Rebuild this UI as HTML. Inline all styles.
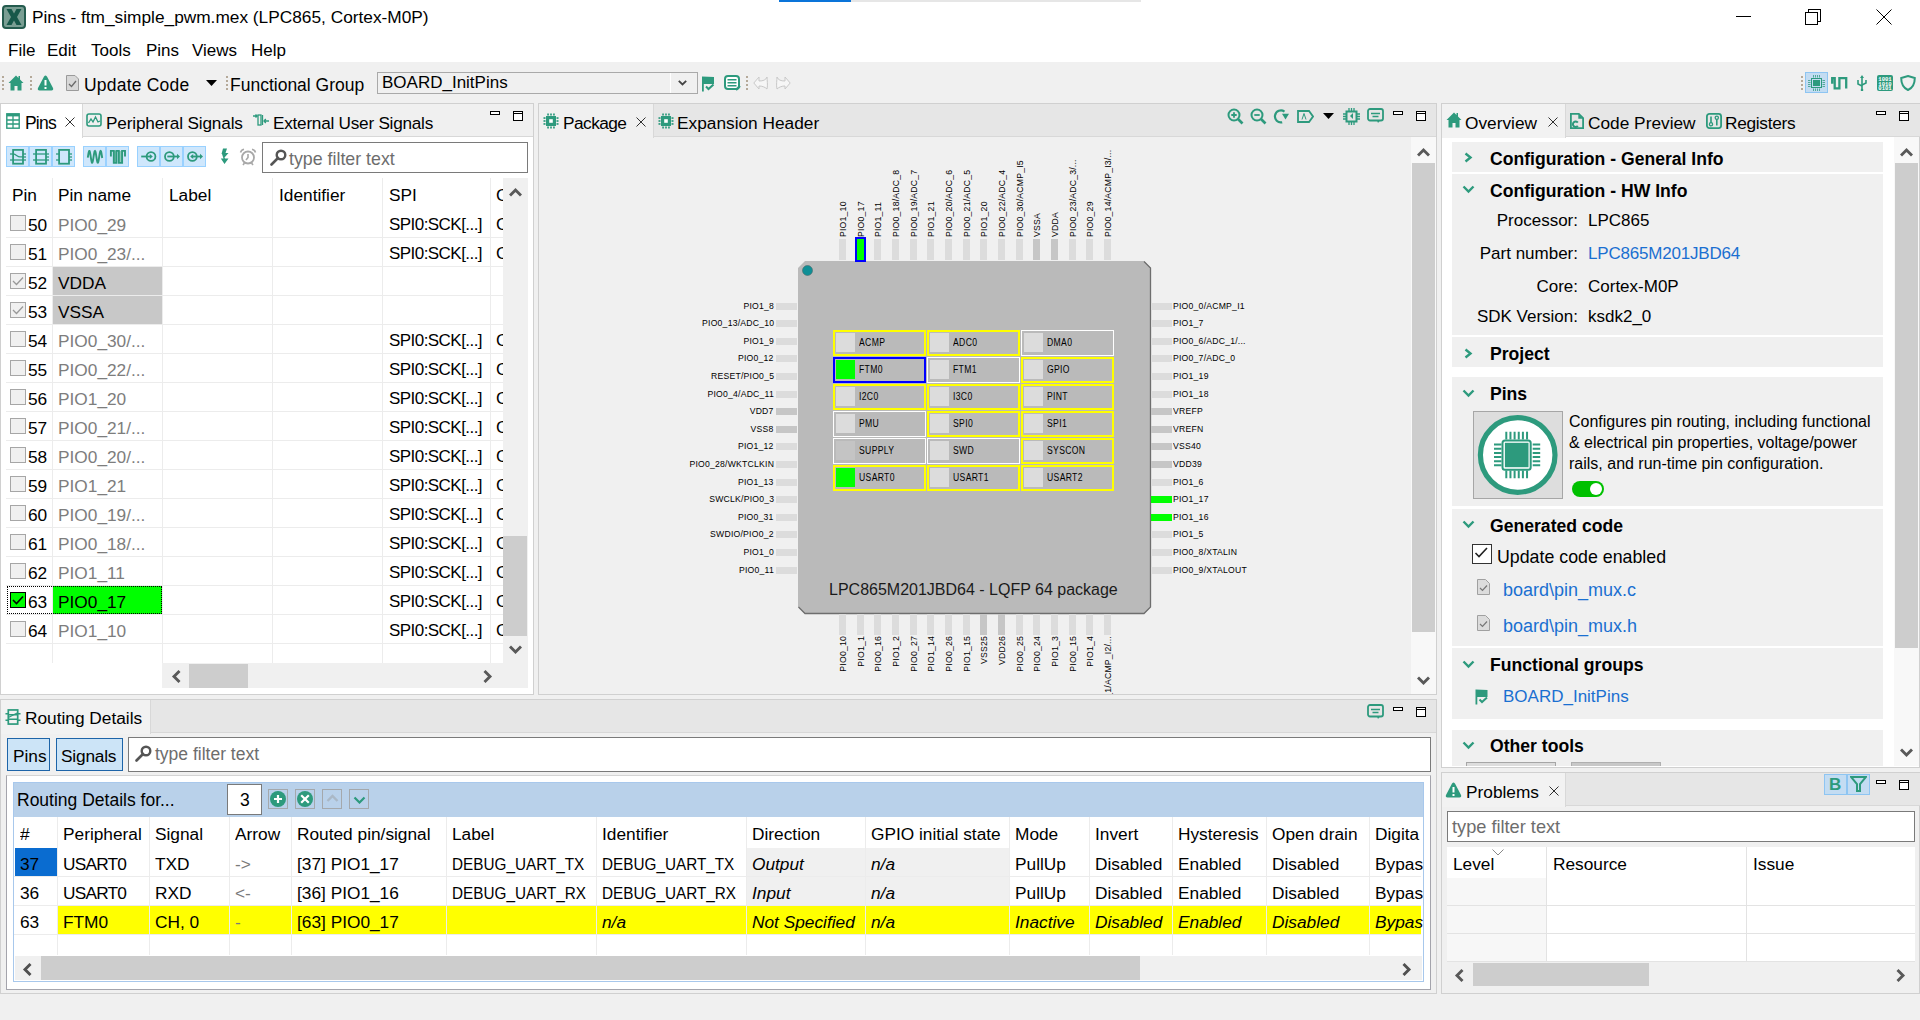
<!DOCTYPE html>
<html><head><meta charset="utf-8">
<style>
*{box-sizing:border-box;margin:0;padding:0}
html,body{width:1920px;height:1020px;overflow:hidden;background:#f0f0f0;font-family:"Liberation Sans",sans-serif;font-size:17px;color:#000}
.a{position:absolute}
.t{position:absolute;white-space:nowrap;line-height:20px}
.panel{position:absolute;border:1px solid #cfcfcf;background:#fff}
.hdr{position:absolute;left:0;right:0;top:0;height:33px;background:linear-gradient(#ebebeb,#e3e3e3);border-bottom:1px solid #d2d2d2}
.tab{position:absolute;top:0;height:33px;background:#f2f2f2;border-right:1px solid #d6d6d6}
.tab.act{background:#fff}
.mn{position:absolute;width:11px;height:5px;border:2px solid #000}
.mx{position:absolute;width:11px;height:11px;border:2px solid #000;border-top-width:3px}
.mx:after{content:"";position:absolute;left:0;right:0;top:1px;height:0}
.gray{color:#7a7a7a}
.sb{position:absolute;background:#f0f0f0}
.thumb{position:absolute;background:#cdcdcd}
.link{color:#1a6fd1}
.vl{position:absolute;width:1px;background:#e8e8e8}
.hl{position:absolute;height:1px;background:#ececec}
</style></head>
<body>
<!-- TITLE BAR -->
<div class="a" style="left:0;top:0;width:1920px;height:62px;background:#fff"></div>
<div class="a" style="left:779px;top:0;width:72px;height:2px;background:#0a74d9"></div>
<div class="a" style="left:851px;top:0;width:290px;height:2px;background:#e6e6e6"></div>
<!-- app icon -->
<div class="a" style="left:2px;top:5px;width:24px;height:24px;background:#7a9e93;border-radius:4px;border:2px solid #245b4e"></div>
<svg class="a" style="left:2px;top:5px" width="24" height="24" viewBox="0 0 24 24"><path d="M4.5 4 L9.5 4 L12 8.5 L14.5 4 L19.5 4 L15 12 L19.5 20 L14.5 20 L12 15.5 L9.5 20 L4.5 20 L9 12 Z" fill="#17584a"/></svg>
<div class="t" style="left:32px;top:7px;font-size:17.3px">Pins - ftm_simple_pwm.mex (LPC865, Cortex-M0P)</div>
<!-- window controls -->
<div class="a" style="left:1736px;top:16px;width:15px;height:1px;background:#000"></div>

<div class="a" style="left:1808px;top:9px;width:13px;height:13px;border:1px solid #000"></div>
<div class="a" style="left:1805px;top:12px;width:13px;height:13px;border:1px solid #000;background:#fff"></div>
<svg class="a" style="left:1876px;top:9px" width="16" height="16"><path d="M0.5 0.5 L15.5 15.5 M15.5 0.5 L0.5 15.5" stroke="#000" stroke-width="1"/></svg>
<!-- MENU -->
<div class="t" style="left:8px;top:41px">File</div>
<div class="t" style="left:47px;top:41px">Edit</div>
<div class="t" style="left:91px;top:41px">Tools</div>
<div class="t" style="left:146px;top:41px">Pins</div>
<div class="t" style="left:192px;top:41px">Views</div>
<div class="t" style="left:251px;top:41px">Help</div>

<!-- TOOLBAR -->

<div class="a" style="left:0;top:62px;width:1920px;height:41px;background:#f0f0f0"></div>
<!-- grips -->
<svg class="a" style="left:1px;top:76px" width="4" height="14"><g fill="#b5a999"><rect x="1" y="0" width="2" height="2"/><rect x="1" y="4" width="2" height="2"/><rect x="1" y="8" width="2" height="2"/><rect x="1" y="12" width="2" height="2"/></g></svg>
<svg class="a" style="left:29px;top:76px" width="4" height="14"><g fill="#b5a999"><rect x="1" y="0" width="2" height="2"/><rect x="1" y="4" width="2" height="2"/><rect x="1" y="8" width="2" height="2"/><rect x="1" y="12" width="2" height="2"/></g></svg>
<svg class="a" style="left:225px;top:76px" width="4" height="14"><g fill="#b5a999"><rect x="1" y="0" width="2" height="2"/><rect x="1" y="4" width="2" height="2"/><rect x="1" y="8" width="2" height="2"/><rect x="1" y="12" width="2" height="2"/></g></svg>
<svg class="a" style="left:745px;top:76px" width="4" height="14"><g fill="#b5a999"><rect x="1" y="0" width="2" height="2"/><rect x="1" y="4" width="2" height="2"/><rect x="1" y="8" width="2" height="2"/><rect x="1" y="12" width="2" height="2"/></g></svg>
<svg class="a" style="left:1800px;top:76px" width="4" height="14"><g fill="#b5a999"><rect x="1" y="0" width="2" height="2"/><rect x="1" y="4" width="2" height="2"/><rect x="1" y="8" width="2" height="2"/><rect x="1" y="12" width="2" height="2"/></g></svg>
<!-- home -->
<svg class="a" style="left:8px;top:75px" width="16" height="16" viewBox="0 0 16 16"><path d="M8 0.5 L0.5 8 L2.5 8 L2.5 15.5 L6.5 15.5 L6.5 11 L9.5 11 L9.5 15.5 L13.5 15.5 L13.5 8 L15.5 8 L12 4.5 L12 1 L10.5 1 L10.5 3 Z" fill="#2d9a7d"/></svg>
<!-- warning -->
<svg class="a" style="left:37px;top:75px" width="17" height="16" viewBox="0 0 17 16"><path d="M8.5 0.5 C9.5 0.5 10 1.5 10.5 2.5 L16 13 C16.6 14.2 16 15.5 14.5 15.5 L2.5 15.5 C1 15.5 0.4 14.2 1 13 L6.5 2.5 C7 1.5 7.5 0.5 8.5 0.5Z" fill="#2d9a7d"/><rect x="7.5" y="5" width="2" height="5.5" fill="#fff"/><rect x="7.5" y="12" width="2" height="2" fill="#fff"/></svg>
<!-- doc -->
<svg class="a" style="left:66px;top:75px" width="13" height="16" viewBox="0 0 13 16"><path d="M0.5 0.5 L9 0.5 L12.5 4 L12.5 15.5 L0.5 15.5Z" fill="#d8d8d8" stroke="#9a9a9a"/><path d="M3 9 L5.5 11.5 L10 6" stroke="#6a6a6a" stroke-width="1.3" fill="none"/></svg>
<div class="t" style="left:84px;top:75px;font-size:17.5px;letter-spacing:0.2px">Update Code</div>
<svg class="a" style="left:206px;top:80px" width="11" height="6"><path d="M0 0 L11 0 L5.5 6Z" fill="#000"/></svg>
<div class="t" style="left:230px;top:75px;font-size:17.5px">Functional Group</div>
<!-- combo -->
<div class="a" style="left:377px;top:72px;width:321px;height:22px;border:1px solid #a9a9a9;background:#f0f0f0"></div>
<div class="a" style="left:670px;top:73px;width:1px;height:20px;background:#fff"></div>
<div class="t" style="left:382px;top:73px;font-size:17px">BOARD_InitPins</div>
<svg class="a" style="left:678px;top:80px" width="9" height="6"><path d="M0.8 0.8 L4.5 4.5 L8.2 0.8" stroke="#444" stroke-width="1.8" fill="none"/></svg>
<!-- flag -->
<svg class="a" style="left:702px;top:76px" width="13" height="16" viewBox="0 0 13 16"><path d="M0 0.5 L12 1 L12 8 L1.8 8 L1.8 15.5 L0 15.5Z" fill="#2d9a7d"/><path d="M4 10.5 L6.5 13 L11.5 8.5" stroke="#2d9a7d" stroke-width="2" fill="none"/></svg>
<!-- comment -->
<svg class="a" style="left:724px;top:75px" width="17" height="16" viewBox="0 0 17 16"><rect x="1" y="1" width="14" height="13" rx="3" fill="#fff" stroke="#2d9a7d" stroke-width="2"/><rect x="3.5" y="4" width="9" height="1.5" fill="#2d9a7d"/><rect x="3.5" y="7" width="9" height="1.5" fill="#2d9a7d"/><rect x="3.5" y="10" width="9" height="1.5" fill="#2d9a7d"/><path d="M12 15 L16 11" stroke="#2d9a7d" stroke-width="2.2"/></svg>
<!-- undo / redo -->
<svg class="a" style="left:753px;top:76px" width="16" height="15" viewBox="0 0 16 15"><path d="M6 1 L0.8 7 L6 13 L6 10 C9 10 12 11 14 13 C15 9 14 4 14 1 C13 4 10 5 6 5Z" fill="#f6f6f6" stroke="#c8c8c8" stroke-width="1"/></svg>
<svg class="a" style="left:775px;top:76px" width="16" height="15" viewBox="0 0 16 15"><path d="M10 1 L15.2 7 L10 13 L10 10 C7 10 4 11 2 13 C1 9 2 4 2 1 C3 4 6 5 10 5Z" fill="#f6f6f6" stroke="#c8c8c8" stroke-width="1"/></svg>
<!-- right toolbar -->
<div class="a" style="left:1805px;top:72px;width:23px;height:21px;background:#c3dcf2;border:1px solid #8ec5f2"></div>
<svg class="a" style="left:1808px;top:75px" width="17" height="16" viewBox="0 0 17 16"><rect x="3.5" y="3.5" width="10" height="9" fill="none" stroke="#2d9a7d" stroke-width="1"/><rect x="5" y="5" width="7" height="6" fill="#2d9a7d"/><g fill="#2d9a7d" opacity="0.75"><rect x="5" y="0" width="1" height="2.5"/><rect x="7" y="0" width="1" height="2.5"/><rect x="9" y="0" width="1" height="2.5"/><rect x="11" y="0" width="1" height="2.5"/><rect x="5" y="13.5" width="1" height="2.5"/><rect x="7" y="13.5" width="1" height="2.5"/><rect x="9" y="13.5" width="1" height="2.5"/><rect x="11" y="13.5" width="1" height="2.5"/><rect x="0" y="5" width="2.5" height="1"/><rect x="0" y="7" width="2.5" height="1"/><rect x="0" y="9" width="2.5" height="1"/><rect x="0" y="11" width="2.5" height="1"/><rect x="14.5" y="5" width="2.5" height="1"/><rect x="14.5" y="7" width="2.5" height="1"/><rect x="14.5" y="9" width="2.5" height="1"/><rect x="14.5" y="11" width="2.5" height="1"/></g></svg>
<svg class="a" style="left:1831px;top:77px" width="17" height="13" viewBox="0 0 17 13"><path d="M1.2 6.7 V1.2 H3.7 V11.4 H8.4 V1.2 H15.2 V11.4" stroke="#2d9a7d" stroke-width="2.3" fill="none"/></svg>
<svg class="a" style="left:1857px;top:75px" width="10" height="16" viewBox="0 0 10 16"><path d="M5 0 L7 3 L5.8 3 L5.8 15 L4.2 15 L4.2 3 L3 3Z" fill="#2d9a7d"/><path d="M1 5 L1 9 L5 11 M9 5 L9 8 L5 10" stroke="#2d9a7d" stroke-width="1.6" fill="none"/><circle cx="5" cy="15" r="1.3" fill="#2d9a7d"/></svg>
<svg class="a" style="left:1877px;top:75px" width="16" height="16" viewBox="0 0 16 16"><rect x="0" y="0" width="16" height="16" rx="2" fill="#2d9a7d"/><text x="8" y="5.5" font-size="5.6" font-family="Liberation Mono" font-weight="700" fill="#fff" text-anchor="middle">1001</text><text x="8" y="10.5" font-size="5.6" font-family="Liberation Mono" font-weight="700" fill="#fff" text-anchor="middle">1010</text><text x="8" y="15.3" font-size="5.6" font-family="Liberation Mono" font-weight="700" fill="#fff" text-anchor="middle">0101</text></svg>
<svg class="a" style="left:1900px;top:75px" width="16" height="16" viewBox="0 0 16 16"><path d="M8 1 L14.8 3 C14.8 9 12.5 13 8 15 C3.5 13 1.2 9 1.2 3Z" fill="none" stroke="#2d9a7d" stroke-width="2"/></svg>


<div class="a" style="left:0px;top:103px;width:534px;height:592px;background:#fff;border:1px solid #d0d0d0;"></div>
<div class="a" style="left:1px;top:104px;width:532px;height:33px;background:#f0f0f0;border-bottom:1px solid #d8d8d8;"></div>
<div class="a" style="left:1px;top:104px;width:82px;height:34px;background:#fff;border-right:1px solid #d8d8d8;"></div>
<svg class="a" style="left:6px;top:113px" width="14" height="16" viewBox="0 0 14 16"><rect x="0.8" y="0.8" width="12.4" height="14.4" fill="none" stroke="#2d9a7d" stroke-width="1.4"/><rect x="0.8" y="0.8" width="12.4" height="2.6" fill="#2d9a7d"/><path d="M0.8 7H13.2M0.8 11H13.2M7 3V15" stroke="#2d9a7d" stroke-width="1.3"/></svg>
<div class="t" style="left:25px;top:113px;font-size:17.5px;letter-spacing:-0.8px;">Pins</div>
<svg class="a" style="left:65px;top:117px" width="10" height="10"><path d="M0.5 0.5 L9.5 9.5 M9.5 0.5 L0.5 9.5" stroke="#1a1a1a" stroke-width="0.9"/></svg>
<svg class="a" style="left:86px;top:113px" width="16" height="14" viewBox="0 0 16 14"><rect x="1" y="1" width="14" height="12" rx="2" fill="none" stroke="#2d9a7d" stroke-width="1.6"/><path d="M2.5 10 L5 6 L7 9 L9.5 4 L12 9 L14 8" stroke="#2d9a7d" stroke-width="1.3" fill="none"/></svg>
<div class="t" style="left:106px;top:113px;font-size:17.2px;letter-spacing:-0.15px;">Peripheral Signals</div>
<svg class="a" style="left:253px;top:114px" width="16" height="12" viewBox="0 0 16 12"><path d="M0 2 L4 2 M2.5 0.5 L4.2 2 L2.5 3.5" stroke="#2d9a7d" stroke-width="1.3" fill="none"/><rect x="5" y="1" width="3" height="10" fill="none" stroke="#2d9a7d" stroke-width="1.3"/><path d="M9.5 1V11" stroke="#2d9a7d" stroke-width="1.3"/><path d="M16 7 L11 7 M12.8 5 L11 7 L12.8 9" stroke="#2d9a7d" stroke-width="1.3" fill="none"/></svg>
<div class="t" style="left:273px;top:113px;font-size:17.2px;letter-spacing:-0.25px;">External User Signals</div>
<svg class="a" style="left:490px;top:111px" width="11" height="5"><rect x="0.5" y="0.5" width="9" height="3" fill="#fff" stroke="#000" stroke-width="1"/></svg>
<svg class="a" style="left:513px;top:111px" width="11" height="11"><rect x="0.5" y="0.5" width="9" height="9" fill="#fff" stroke="#000" stroke-width="1"/><path d="M0 2.5H10" stroke="#000" stroke-width="1"/></svg>
<div class="a" style="left:6px;top:146px;width:23px;height:21px;background:#cfe7fc;border:1px solid #99d1ff;"></div>
<div class="a" style="left:29px;top:146px;width:23px;height:21px;background:#cfe7fc;border:1px solid #99d1ff;"></div>
<div class="a" style="left:52px;top:146px;width:23px;height:21px;background:#cfe7fc;border:1px solid #99d1ff;"></div>
<div class="a" style="left:83px;top:146px;width:23px;height:21px;background:#cfe7fc;border:1px solid #99d1ff;"></div>
<div class="a" style="left:106px;top:146px;width:23px;height:21px;background:#cfe7fc;border:1px solid #99d1ff;"></div>
<div class="a" style="left:137px;top:146px;width:23px;height:21px;background:#cfe7fc;border:1px solid #99d1ff;"></div>
<div class="a" style="left:160px;top:146px;width:23px;height:21px;background:#cfe7fc;border:1px solid #99d1ff;"></div>
<div class="a" style="left:183px;top:146px;width:23px;height:21px;background:#cfe7fc;border:1px solid #99d1ff;"></div>
<svg class="a" style="left:10px;top:148px" width="16" height="18" viewBox="0 0 16 18"><rect x="3.1" y="1.9" width="9.9" height="13.8" fill="none" stroke="#2d9a7d" stroke-width="1.8"/><path d="M0 5.9H3M0 12H3M13 5.9H16M13 8.9H16M13 12H16" stroke="#2d9a7d" stroke-width="1.5" opacity="0.85"/><path d="M3 12H13" stroke="#2d9a7d" stroke-width="1.5" opacity="0.85"/><path d="M3.5 5.9 C6 6.3 7.5 8.9 10 8.9 H13" stroke="#2d9a7d" stroke-width="1.3" fill="none"/></svg>
<svg class="a" style="left:33px;top:148px" width="16" height="18" viewBox="0 0 16 18"><rect x="3.1" y="1.9" width="9.9" height="13.8" fill="none" stroke="#2d9a7d" stroke-width="1.8"/><path d="M0 5.9H3M0 12H3M13 5.9H16M13 8.9H16M13 12H16" stroke="#2d9a7d" stroke-width="1.5" opacity="0.85"/><path d="M3 5.9H13M3 12H13" stroke="#2d9a7d" stroke-width="1.5" opacity="0.85"/></svg>
<svg class="a" style="left:56px;top:148px" width="16" height="18" viewBox="0 0 16 18"><rect x="3.1" y="1.9" width="9.9" height="13.8" fill="none" stroke="#2d9a7d" stroke-width="1.8"/><path d="M0 5.9H3M0 12H3M13 5.9H16M13 8.9H16M13 12H16" stroke="#2d9a7d" stroke-width="1.5" opacity="0.85"/></svg>
<svg class="a" style="left:86px;top:149px" width="18" height="16" viewBox="0 0 18 16"><path d="M1.80 8.73 L2.04 7.16 L2.28 5.63 L2.52 4.26 L2.76 3.13 L3.00 2.34 L3.24 1.94 L3.48 1.96 L3.72 2.40 L3.96 3.22 L4.20 4.36 L4.44 5.75 L4.68 7.29 L4.92 8.86 L5.16 10.36 L5.40 11.68 L5.64 12.72 L5.88 13.40 L6.12 13.69 L6.36 13.56 L6.60 13.02 L6.84 12.10 L7.08 10.88 L7.32 9.44 L7.56 7.88 L7.80 6.32 L8.04 4.86 L8.28 3.61 L8.52 2.66 L8.76 2.08 L9.00 1.90 L9.24 2.15 L9.48 2.79 L9.72 3.80 L9.96 5.09 L10.20 6.57 L10.44 8.15 L10.68 9.69 L10.92 11.10 L11.16 12.28 L11.40 13.14 L11.64 13.61 L11.88 13.67 L12.12 13.32 L12.36 12.57 L12.60 11.47 L12.84 10.12 L13.08 8.60 L13.32 7.03 L13.56 5.51 L13.80 4.15 L14.04 3.05 L14.28 2.30 L14.52 1.93 L14.76 1.98 L15.00 2.45 L15.24 3.30 L15.48 4.47 L15.72 5.88 L15.96 7.42 L16.20 8.99" stroke="#2d9a7d" stroke-width="1.9" fill="none"/></svg>
<svg class="a" style="left:109px;top:149px" width="18" height="16" viewBox="0 0 18 16"><rect x="4.8" y="1.9" width="2.6" height="12" fill="#8ccbb9"/><rect x="9.8" y="1.9" width="3.3" height="12" fill="#8ccbb9"/><path d="M1.9 7.6 V1.9 H4.8 V13.9 H7.4 V1.9 H9.8 V13.9 H13.1 V1.9 H16 V7.6" stroke="#2d9a7d" stroke-width="1.9" fill="none"/></svg>
<svg class="a" style="left:140px;top:149px" width="17" height="15" viewBox="0 0 17 15"><circle cx="11" cy="7.5" r="4.4" fill="none" stroke="#2d9a7d" stroke-width="1.8"/><path d="M1.2 7.5H10.5" stroke="#2d9a7d" stroke-width="1.8"/><path d="M9.8 5 L12.8 7.5 L9.8 10Z" fill="#2d9a7d"/></svg>
<svg class="a" style="left:163px;top:149px" width="18" height="15" viewBox="0 0 18 15"><circle cx="6.4" cy="7.5" r="4.4" fill="none" stroke="#2d9a7d" stroke-width="1.8"/><path d="M4.3 7.5H14.5" stroke="#2d9a7d" stroke-width="1.8"/><path d="M14 4.8 L17 7.5 L14 10.2Z" fill="#2d9a7d"/></svg>
<svg class="a" style="left:186px;top:149px" width="18" height="15" viewBox="0 0 18 15"><circle cx="6.4" cy="7.5" r="4.4" fill="none" stroke="#2d9a7d" stroke-width="1.8"/><path d="M5.5 7.5H14.5" stroke="#2d9a7d" stroke-width="1.8"/><path d="M14 4.8 L17 7.5 L14 10.2Z" fill="#2d9a7d"/><path d="M7.2 5 L4.2 7.5 L7.2 10Z" fill="#2d9a7d"/></svg>
<svg class="a" style="left:220px;top:148px" width="10" height="17" viewBox="0 0 10 17"><path d="M3 0.5 L7 0.5 L5.5 5 L8.5 5 L4.5 9.5 L5 10.5 L8.5 10.5 L4.5 16 L0.8 10.5 L3.5 10.5 L2 6 L1.5 6Z" fill="#2d9a7d"/></svg>
<svg class="a" style="left:239px;top:148px" width="18" height="18" viewBox="0 0 18 18"><circle cx="9" cy="9.5" r="6" fill="none" stroke="#a8a8a8" stroke-width="1.8"/><path d="M9 6V9.5L7 12M1.5 4.5 C2 2.5 3.5 1.5 5 1.2M16.5 4.5 C16 2.5 14.5 1.5 13 1.2M4 17 L5.5 15M14 17 L12.5 15" stroke="#a8a8a8" stroke-width="1.6" fill="none"/></svg>
<div class="a" style="left:262px;top:142px;width:266px;height:31px;background:#fff;border:1px solid #7a7a7a;"></div>
<svg class="a" style="left:270px;top:149px" width="17" height="17" viewBox="0 0 17 17"><circle cx="11" cy="6" r="4.3" fill="none" stroke="#555" stroke-width="2.4"/><path d="M8 9 L1.5 15.5" stroke="#555" stroke-width="2.6" stroke-linecap="round"/></svg>
<div class="t" style="left:289px;top:149px;font-size:17.8px;color:#6d6d6d;">type filter text</div>
<div class="t" style="left:12px;top:185px;font-size:17.3px;">Pin</div>
<div class="t" style="left:58px;top:185px;font-size:17.3px;">Pin name</div>
<div class="t" style="left:169px;top:185px;font-size:17.3px;">Label</div>
<div class="t" style="left:279px;top:185px;font-size:17.3px;">Identifier</div>
<div class="t" style="left:389px;top:185px;font-size:17.3px;">SPI</div>
<div class="t" style="left:496px;top:185px;font-size:17.3px;">C</div>
<div class="a" style="left:503px;top:178px;width:25px;height:485px;background:#f0f0f0;"></div>
<div class="a" style="left:503px;top:536px;width:24px;height:100px;background:#cdcdcd;"></div>
<svg class="a" style="left:509px;top:187px" width="13" height="10"><path d="M1 8.5 L6.5 3 L12 8.5" stroke="#595959" stroke-width="2.9" fill="none" stroke-linejoin="miter"/></svg>
<svg class="a" style="left:509px;top:645px" width="13" height="10"><path d="M1 1.5 L6.5 7 L12 1.5" stroke="#595959" stroke-width="2.9" fill="none" stroke-linejoin="miter"/></svg>
<div class="a" style="left:52px;top:178px;width:1px;height:485px;background:#ececec;"></div>
<div class="a" style="left:162px;top:178px;width:1px;height:485px;background:#ececec;"></div>
<div class="a" style="left:272px;top:178px;width:1px;height:485px;background:#ececec;"></div>
<div class="a" style="left:382px;top:178px;width:1px;height:485px;background:#ececec;"></div>
<div class="a" style="left:490px;top:178px;width:1px;height:485px;background:#ececec;"></div>
<div class="a" style="left:6px;top:237px;width:497px;height:1px;background:#ececec;"></div>
<div class="a" style="left:10px;top:215px;width:16px;height:16px;background:#f0f0f0;border:1px solid #a6a6a6;"></div>
<div class="t" style="left:28px;top:215px;font-size:17.3px;">50</div>
<div class="t" style="left:58px;top:215px;font-size:17.3px;color:#7d7d7d;">PIO0_29</div>
<div class="t" style="left:389px;top:215px;font-size:17px;letter-spacing:-0.55px;">SPI0:SCK[...]</div>
<div class="a" style="left:496px;top:215px;width:7px;height:22px;overflow:hidden;white-space:nowrap;line-height:20px">C</div>
<div class="a" style="left:6px;top:266px;width:497px;height:1px;background:#ececec;"></div>
<div class="a" style="left:10px;top:244px;width:16px;height:16px;background:#f0f0f0;border:1px solid #a6a6a6;"></div>
<div class="t" style="left:28px;top:244px;font-size:17.3px;">51</div>
<div class="t" style="left:58px;top:244px;font-size:17.3px;color:#7d7d7d;">PIO0_23/...</div>
<div class="t" style="left:389px;top:244px;font-size:17px;letter-spacing:-0.55px;">SPI0:SCK[...]</div>
<div class="a" style="left:496px;top:244px;width:7px;height:22px;overflow:hidden;white-space:nowrap;line-height:20px">C</div>
<div class="a" style="left:6px;top:295px;width:497px;height:1px;background:#ececec;"></div>
<div class="a" style="left:53px;top:267px;width:109px;height:28px;background:#c8c8c8;"></div>
<div class="a" style="left:10px;top:273px;width:16px;height:16px;background:#f0f0f0;border:1px solid #a6a6a6;"></div>
<svg class="a" style="left:10px;top:273px" width="16" height="16"><path d="M3 8 L6.5 11.5 L13 4.5" stroke="#999" stroke-width="1.3" fill="none"/></svg>
<div class="t" style="left:28px;top:273px;font-size:17.3px;">52</div>
<div class="t" style="left:58px;top:273px;font-size:17.3px;">VDDA</div>
<div class="a" style="left:6px;top:324px;width:497px;height:1px;background:#ececec;"></div>
<div class="a" style="left:53px;top:296px;width:109px;height:28px;background:#c8c8c8;"></div>
<div class="a" style="left:10px;top:302px;width:16px;height:16px;background:#f0f0f0;border:1px solid #a6a6a6;"></div>
<svg class="a" style="left:10px;top:302px" width="16" height="16"><path d="M3 8 L6.5 11.5 L13 4.5" stroke="#999" stroke-width="1.3" fill="none"/></svg>
<div class="t" style="left:28px;top:302px;font-size:17.3px;">53</div>
<div class="t" style="left:58px;top:302px;font-size:17.3px;">VSSA</div>
<div class="a" style="left:6px;top:353px;width:497px;height:1px;background:#ececec;"></div>
<div class="a" style="left:10px;top:331px;width:16px;height:16px;background:#f0f0f0;border:1px solid #a6a6a6;"></div>
<div class="t" style="left:28px;top:331px;font-size:17.3px;">54</div>
<div class="t" style="left:58px;top:331px;font-size:17.3px;color:#7d7d7d;">PIO0_30/...</div>
<div class="t" style="left:389px;top:331px;font-size:17px;letter-spacing:-0.55px;">SPI0:SCK[...]</div>
<div class="a" style="left:496px;top:331px;width:7px;height:22px;overflow:hidden;white-space:nowrap;line-height:20px">C</div>
<div class="a" style="left:6px;top:382px;width:497px;height:1px;background:#ececec;"></div>
<div class="a" style="left:10px;top:360px;width:16px;height:16px;background:#f0f0f0;border:1px solid #a6a6a6;"></div>
<div class="t" style="left:28px;top:360px;font-size:17.3px;">55</div>
<div class="t" style="left:58px;top:360px;font-size:17.3px;color:#7d7d7d;">PIO0_22/...</div>
<div class="t" style="left:389px;top:360px;font-size:17px;letter-spacing:-0.55px;">SPI0:SCK[...]</div>
<div class="a" style="left:496px;top:360px;width:7px;height:22px;overflow:hidden;white-space:nowrap;line-height:20px">C</div>
<div class="a" style="left:6px;top:411px;width:497px;height:1px;background:#ececec;"></div>
<div class="a" style="left:10px;top:389px;width:16px;height:16px;background:#f0f0f0;border:1px solid #a6a6a6;"></div>
<div class="t" style="left:28px;top:389px;font-size:17.3px;">56</div>
<div class="t" style="left:58px;top:389px;font-size:17.3px;color:#7d7d7d;">PIO1_20</div>
<div class="t" style="left:389px;top:389px;font-size:17px;letter-spacing:-0.55px;">SPI0:SCK[...]</div>
<div class="a" style="left:496px;top:389px;width:7px;height:22px;overflow:hidden;white-space:nowrap;line-height:20px">C</div>
<div class="a" style="left:6px;top:440px;width:497px;height:1px;background:#ececec;"></div>
<div class="a" style="left:10px;top:418px;width:16px;height:16px;background:#f0f0f0;border:1px solid #a6a6a6;"></div>
<div class="t" style="left:28px;top:418px;font-size:17.3px;">57</div>
<div class="t" style="left:58px;top:418px;font-size:17.3px;color:#7d7d7d;">PIO0_21/...</div>
<div class="t" style="left:389px;top:418px;font-size:17px;letter-spacing:-0.55px;">SPI0:SCK[...]</div>
<div class="a" style="left:496px;top:418px;width:7px;height:22px;overflow:hidden;white-space:nowrap;line-height:20px">C</div>
<div class="a" style="left:6px;top:469px;width:497px;height:1px;background:#ececec;"></div>
<div class="a" style="left:10px;top:447px;width:16px;height:16px;background:#f0f0f0;border:1px solid #a6a6a6;"></div>
<div class="t" style="left:28px;top:447px;font-size:17.3px;">58</div>
<div class="t" style="left:58px;top:447px;font-size:17.3px;color:#7d7d7d;">PIO0_20/...</div>
<div class="t" style="left:389px;top:447px;font-size:17px;letter-spacing:-0.55px;">SPI0:SCK[...]</div>
<div class="a" style="left:496px;top:447px;width:7px;height:22px;overflow:hidden;white-space:nowrap;line-height:20px">C</div>
<div class="a" style="left:6px;top:498px;width:497px;height:1px;background:#ececec;"></div>
<div class="a" style="left:10px;top:476px;width:16px;height:16px;background:#f0f0f0;border:1px solid #a6a6a6;"></div>
<div class="t" style="left:28px;top:476px;font-size:17.3px;">59</div>
<div class="t" style="left:58px;top:476px;font-size:17.3px;color:#7d7d7d;">PIO1_21</div>
<div class="t" style="left:389px;top:476px;font-size:17px;letter-spacing:-0.55px;">SPI0:SCK[...]</div>
<div class="a" style="left:496px;top:476px;width:7px;height:22px;overflow:hidden;white-space:nowrap;line-height:20px">C</div>
<div class="a" style="left:6px;top:527px;width:497px;height:1px;background:#ececec;"></div>
<div class="a" style="left:10px;top:505px;width:16px;height:16px;background:#f0f0f0;border:1px solid #a6a6a6;"></div>
<div class="t" style="left:28px;top:505px;font-size:17.3px;">60</div>
<div class="t" style="left:58px;top:505px;font-size:17.3px;color:#7d7d7d;">PIO0_19/...</div>
<div class="t" style="left:389px;top:505px;font-size:17px;letter-spacing:-0.55px;">SPI0:SCK[...]</div>
<div class="a" style="left:496px;top:505px;width:7px;height:22px;overflow:hidden;white-space:nowrap;line-height:20px">C</div>
<div class="a" style="left:6px;top:556px;width:497px;height:1px;background:#ececec;"></div>
<div class="a" style="left:10px;top:534px;width:16px;height:16px;background:#f0f0f0;border:1px solid #a6a6a6;"></div>
<div class="t" style="left:28px;top:534px;font-size:17.3px;">61</div>
<div class="t" style="left:58px;top:534px;font-size:17.3px;color:#7d7d7d;">PIO0_18/...</div>
<div class="t" style="left:389px;top:534px;font-size:17px;letter-spacing:-0.55px;">SPI0:SCK[...]</div>
<div class="a" style="left:496px;top:534px;width:7px;height:22px;overflow:hidden;white-space:nowrap;line-height:20px">C</div>
<div class="a" style="left:6px;top:585px;width:497px;height:1px;background:#ececec;"></div>
<div class="a" style="left:10px;top:563px;width:16px;height:16px;background:#f0f0f0;border:1px solid #a6a6a6;"></div>
<div class="t" style="left:28px;top:563px;font-size:17.3px;">62</div>
<div class="t" style="left:58px;top:563px;font-size:17.3px;color:#7d7d7d;">PIO1_11</div>
<div class="t" style="left:389px;top:563px;font-size:17px;letter-spacing:-0.55px;">SPI0:SCK[...]</div>
<div class="a" style="left:496px;top:563px;width:7px;height:22px;overflow:hidden;white-space:nowrap;line-height:20px">C</div>
<div class="a" style="left:6px;top:614px;width:497px;height:1px;background:#ececec;"></div>
<div class="a" style="left:53px;top:586px;width:109px;height:28px;background:#00ff00;"></div>
<div class="a" style="left:7px;top:586px;width:155px;height:28px;border:1px dotted #000;"></div>
<div class="a" style="left:10px;top:592px;width:16px;height:16px;background:#00ff00;border:1px solid #000;"></div>
<svg class="a" style="left:10px;top:592px" width="16" height="16"><path d="M3 8 L6.5 11.5 L13 4.5" stroke="#000" stroke-width="1.6" fill="none"/></svg>
<div class="t" style="left:28px;top:592px;font-size:17.3px;">63</div>
<div class="t" style="left:58px;top:592px;font-size:17.3px;">PIO0_17</div>
<div class="t" style="left:389px;top:592px;font-size:17px;letter-spacing:-0.55px;">SPI0:SCK[...]</div>
<div class="a" style="left:496px;top:592px;width:7px;height:22px;overflow:hidden;white-space:nowrap;line-height:20px">C</div>
<div class="a" style="left:6px;top:643px;width:497px;height:1px;background:#ececec;"></div>
<div class="a" style="left:10px;top:621px;width:16px;height:16px;background:#f0f0f0;border:1px solid #a6a6a6;"></div>
<div class="t" style="left:28px;top:621px;font-size:17.3px;">64</div>
<div class="t" style="left:58px;top:621px;font-size:17.3px;color:#7d7d7d;">PIO1_10</div>
<div class="t" style="left:389px;top:621px;font-size:17px;letter-spacing:-0.55px;">SPI0:SCK[...]</div>
<div class="a" style="left:496px;top:621px;width:7px;height:22px;overflow:hidden;white-space:nowrap;line-height:20px">C</div>
<div class="a" style="left:162px;top:663px;width:366px;height:25px;background:#f0f0f0;"></div>
<div class="a" style="left:189px;top:664px;width:59px;height:24px;background:#cdcdcd;"></div>
<svg class="a" style="left:171px;top:670px" width="10" height="13"><path d="M8.5 1 L3 6.5 L8.5 12" stroke="#595959" stroke-width="2.9" fill="none" stroke-linejoin="miter"/></svg>
<svg class="a" style="left:483px;top:670px" width="10" height="13"><path d="M1.5 1 L7 6.5 L1.5 12" stroke="#595959" stroke-width="2.9" fill="none" stroke-linejoin="miter"/></svg>
<div class="a" style="left:538px;top:103px;width:899px;height:592px;background:#f0f0f0;border:1px solid #d0d0d0;"></div>
<div class="a" style="left:539px;top:104px;width:897px;height:33px;background:#e6e6e6;border-bottom:1px solid #d8d8d8;"></div>
<div class="a" style="left:539px;top:104px;width:115px;height:34px;background:#f0f0f0;border-right:1px solid #d8d8d8;"></div>
<svg class="a" style="left:543px;top:113px" width="16" height="16" viewBox="0 0 16 16"><rect x="3" y="3" width="10" height="10" fill="#2d9a7d"/><rect x="6.2" y="6.2" width="3.6" height="3.6" fill="#fff"/><g fill="#2d9a7d"><rect x="4.2" y="0.5" width="1.7" height="2"/><rect x="7.15" y="0.5" width="1.7" height="2"/><rect x="10.1" y="0.5" width="1.7" height="2"/><rect x="4.2" y="13.5" width="1.7" height="2"/><rect x="7.15" y="13.5" width="1.7" height="2"/><rect x="10.1" y="13.5" width="1.7" height="2"/><rect x="0.5" y="4.2" width="2" height="1.7"/><rect x="0.5" y="7.15" width="2" height="1.7"/><rect x="0.5" y="10.1" width="2" height="1.7"/><rect x="13.5" y="4.2" width="2" height="1.7"/><rect x="13.5" y="7.15" width="2" height="1.7"/><rect x="13.5" y="10.1" width="2" height="1.7"/></g></svg>
<div class="t" style="left:563px;top:113px;font-size:17.3px;letter-spacing:-0.55px;">Package</div>
<svg class="a" style="left:636px;top:117px" width="10" height="10"><path d="M0.5 0.5 L9.5 9.5 M9.5 0.5 L0.5 9.5" stroke="#1a1a1a" stroke-width="0.9"/></svg>
<svg class="a" style="left:658px;top:113px" width="16" height="16" viewBox="0 0 16 16"><rect x="3" y="3" width="10" height="10" fill="#2d9a7d"/><rect x="6.2" y="6.2" width="3.6" height="3.6" fill="#fff"/><g fill="#2d9a7d"><rect x="4.2" y="0.5" width="1.7" height="2"/><rect x="7.15" y="0.5" width="1.7" height="2"/><rect x="10.1" y="0.5" width="1.7" height="2"/><rect x="4.2" y="13.5" width="1.7" height="2"/><rect x="7.15" y="13.5" width="1.7" height="2"/><rect x="10.1" y="13.5" width="1.7" height="2"/><rect x="0.5" y="4.2" width="2" height="1.7"/><rect x="0.5" y="7.15" width="2" height="1.7"/><rect x="0.5" y="10.1" width="2" height="1.7"/><rect x="13.5" y="4.2" width="2" height="1.7"/><rect x="13.5" y="7.15" width="2" height="1.7"/><rect x="13.5" y="10.1" width="2" height="1.7"/></g></svg>
<div class="t" style="left:677px;top:113px;font-size:17.3px;">Expansion Header</div>
<svg class="a" style="left:1227px;top:108px" width="17" height="17" viewBox="0 0 17 17"><circle cx="7" cy="7" r="5.5" fill="none" stroke="#2d9a7d" stroke-width="2"/><path d="M4.3 7H9.7M7 4.3V9.7" stroke="#2d9a7d" stroke-width="1.8"/><path d="M11 11 L15.5 15.5" stroke="#2d9a7d" stroke-width="2.6"/></svg>
<svg class="a" style="left:1250px;top:108px" width="17" height="17" viewBox="0 0 17 17"><circle cx="7" cy="7" r="5.5" fill="none" stroke="#2d9a7d" stroke-width="2"/><path d="M4.3 7H9.7" stroke="#2d9a7d" stroke-width="1.8"/><path d="M11 11 L15.5 15.5" stroke="#2d9a7d" stroke-width="2.6"/></svg>
<svg class="a" style="left:1273px;top:108px" width="17" height="16" viewBox="0 0 17 16"><path d="M11.5 3.6 A6 6 0 1 0 9.2 14.3" fill="none" stroke="#2d9a7d" stroke-width="2.2"/><path d="M9 5.7 L16 5.7 L12.5 11.5Z" fill="#2d9a7d"/></svg>
<svg class="a" style="left:1297px;top:110px" width="17" height="13" viewBox="0 0 17 13"><path d="M1 1H12L16 6.5L12 12H1Z" fill="none" stroke="#2d9a7d" stroke-width="1.8"/><path d="M5 9.5L7 3.5L9 9.5" stroke="#2d9a7d" stroke-width="1" fill="none"/></svg>
<svg class="a" style="left:1323px;top:113px" width="11" height="6"><path d="M0 0 L11 0 L5.5 6Z" fill="#000"/></svg>
<svg class="a" style="left:1343px;top:108px" width="17" height="17" viewBox="0 0 17 17"><rect x="3.5" y="3.5" width="10" height="10" fill="none" stroke="#2d9a7d" stroke-width="2"/><g stroke="#2d9a7d" stroke-width="1.3"><path d="M6 0V3M8.5 0V3M11 0V3M6 14V17M8.5 14V17M11 14V17M0 6H3M0 8.5H3M0 11H3M14 6H17M14 8.5H17M14 11H17"/></g><path d="M7 8 L10 5 L10 11Z" fill="#2d9a7d"/></svg>
<svg class="a" style="left:1367px;top:108px" width="17" height="16" viewBox="0 0 17 16"><rect x="1" y="1" width="15" height="11.5" rx="2" fill="none" stroke="#2d9a7d" stroke-width="1.8"/><path d="M4 5.5H13M5.5 8.5H11.5" stroke="#2d9a7d" stroke-width="1.6"/><path d="M10 12.5 L11 15 L13 12.5" fill="#2d9a7d"/></svg>
<svg class="a" style="left:1393px;top:111px" width="11" height="5"><rect x="0.5" y="0.5" width="9" height="3" fill="#fff" stroke="#000" stroke-width="1"/></svg>
<svg class="a" style="left:1416px;top:111px" width="11" height="11"><rect x="0.5" y="0.5" width="9" height="9" fill="#fff" stroke="#000" stroke-width="1"/><path d="M0 2.5H10" stroke="#000" stroke-width="1"/></svg>
<div class="a" style="left:1411px;top:137px;width:25px;height:557px;background:#f8f8f8;"></div>
<div class="a" style="left:1412px;top:163px;width:23px;height:469px;background:#cdcdcd;"></div>
<svg class="a" style="left:1417px;top:147px" width="13" height="10"><path d="M1 8.5 L6.5 3 L12 8.5" stroke="#595959" stroke-width="2.9" fill="none" stroke-linejoin="miter"/></svg>
<svg class="a" style="left:1417px;top:676px" width="13" height="10"><path d="M1 1.5 L6.5 7 L12 1.5" stroke="#595959" stroke-width="2.9" fill="none" stroke-linejoin="miter"/></svg>
<svg class="a" style="left:798px;top:261px" width="354" height="354"><path d="M7 0 L346 0 L353 7 L353 346 L346 353 L7 353 L0 346 L0 7Z" fill="#bababa"/><path d="M346 0.5 L352.5 7 L352.5 346 L346 352.5 L7 352.5 L0.5 346" fill="none" stroke="#6e6e6e" stroke-width="1.3"/><circle cx="9.5" cy="9.5" r="5" fill="#0f8f96" stroke="#4a6a6a" stroke-width="0.6"/></svg>
<div class="t" style="left:829px;top:580px;font-size:16px;color:#1a1a1a;">LPC865M201JBD64 - LQFP 64 package</div>
<div class="a" style="left:539px;top:137px;width:872px;height:557px;overflow:hidden">
<div class="a" style="left:300px;top:102px;width:7px;height:21px;background:#dcdcdc;"></div>
<div class="a" style="left:303.5px;top:100px;width:0;height:0"><div style="position:absolute;left:0;top:0;transform:rotate(-90deg) scaleX(0.9);transform-origin:0 0;white-space:nowrap;font-size:9.6px;line-height:12px;letter-spacing:0.25px;"><div style="position:absolute;left:0;top:-6px">PIO1_10</div></div></div>
<div class="a" style="left:316px;top:100px;width:11px;height:25px;background:#00ff00;border:2px solid #0000ff;"></div>
<div class="a" style="left:321.5px;top:100px;width:0;height:0"><div style="position:absolute;left:0;top:0;transform:rotate(-90deg) scaleX(0.9);transform-origin:0 0;white-space:nowrap;font-size:9.6px;line-height:12px;letter-spacing:0.25px;"><div style="position:absolute;left:0;top:-6px">PIO0_17</div></div></div>
<div class="a" style="left:335px;top:102px;width:7px;height:21px;background:#dcdcdc;"></div>
<div class="a" style="left:338.5px;top:100px;width:0;height:0"><div style="position:absolute;left:0;top:0;transform:rotate(-90deg) scaleX(0.9);transform-origin:0 0;white-space:nowrap;font-size:9.6px;line-height:12px;letter-spacing:0.25px;"><div style="position:absolute;left:0;top:-6px">PIO1_11</div></div></div>
<div class="a" style="left:353px;top:102px;width:7px;height:21px;background:#dcdcdc;"></div>
<div class="a" style="left:356.5px;top:100px;width:0;height:0"><div style="position:absolute;left:0;top:0;transform:rotate(-90deg) scaleX(0.9);transform-origin:0 0;white-space:nowrap;font-size:9.6px;line-height:12px;letter-spacing:0.25px;"><div style="position:absolute;left:0;top:-6px">PIO0_18/ADC_8</div></div></div>
<div class="a" style="left:371px;top:102px;width:7px;height:21px;background:#dcdcdc;"></div>
<div class="a" style="left:374.5px;top:100px;width:0;height:0"><div style="position:absolute;left:0;top:0;transform:rotate(-90deg) scaleX(0.9);transform-origin:0 0;white-space:nowrap;font-size:9.6px;line-height:12px;letter-spacing:0.25px;"><div style="position:absolute;left:0;top:-6px">PIO0_19/ADC_7</div></div></div>
<div class="a" style="left:388px;top:102px;width:7px;height:21px;background:#dcdcdc;"></div>
<div class="a" style="left:391.5px;top:100px;width:0;height:0"><div style="position:absolute;left:0;top:0;transform:rotate(-90deg) scaleX(0.9);transform-origin:0 0;white-space:nowrap;font-size:9.6px;line-height:12px;letter-spacing:0.25px;"><div style="position:absolute;left:0;top:-6px">PIO1_21</div></div></div>
<div class="a" style="left:406px;top:102px;width:7px;height:21px;background:#dcdcdc;"></div>
<div class="a" style="left:409.5px;top:100px;width:0;height:0"><div style="position:absolute;left:0;top:0;transform:rotate(-90deg) scaleX(0.9);transform-origin:0 0;white-space:nowrap;font-size:9.6px;line-height:12px;letter-spacing:0.25px;"><div style="position:absolute;left:0;top:-6px">PIO0_20/ADC_6</div></div></div>
<div class="a" style="left:424px;top:102px;width:7px;height:21px;background:#dcdcdc;"></div>
<div class="a" style="left:427.5px;top:100px;width:0;height:0"><div style="position:absolute;left:0;top:0;transform:rotate(-90deg) scaleX(0.9);transform-origin:0 0;white-space:nowrap;font-size:9.6px;line-height:12px;letter-spacing:0.25px;"><div style="position:absolute;left:0;top:-6px">PIO0_21/ADC_5</div></div></div>
<div class="a" style="left:441px;top:102px;width:7px;height:21px;background:#dcdcdc;"></div>
<div class="a" style="left:444.5px;top:100px;width:0;height:0"><div style="position:absolute;left:0;top:0;transform:rotate(-90deg) scaleX(0.9);transform-origin:0 0;white-space:nowrap;font-size:9.6px;line-height:12px;letter-spacing:0.25px;"><div style="position:absolute;left:0;top:-6px">PIO1_20</div></div></div>
<div class="a" style="left:459px;top:102px;width:7px;height:21px;background:#dcdcdc;"></div>
<div class="a" style="left:462.5px;top:100px;width:0;height:0"><div style="position:absolute;left:0;top:0;transform:rotate(-90deg) scaleX(0.9);transform-origin:0 0;white-space:nowrap;font-size:9.6px;line-height:12px;letter-spacing:0.25px;"><div style="position:absolute;left:0;top:-6px">PIO0_22/ADC_4</div></div></div>
<div class="a" style="left:477px;top:102px;width:7px;height:21px;background:#dcdcdc;"></div>
<div class="a" style="left:480.5px;top:100px;width:0;height:0"><div style="position:absolute;left:0;top:0;transform:rotate(-90deg) scaleX(0.9);transform-origin:0 0;white-space:nowrap;font-size:9.6px;line-height:12px;letter-spacing:0.25px;"><div style="position:absolute;left:0;top:-6px">PIO0_30/ACMP_I5</div></div></div>
<div class="a" style="left:494px;top:102px;width:7px;height:21px;background:#c6c6c6;"></div>
<div class="a" style="left:497.5px;top:100px;width:0;height:0"><div style="position:absolute;left:0;top:0;transform:rotate(-90deg) scaleX(0.9);transform-origin:0 0;white-space:nowrap;font-size:9.6px;line-height:12px;letter-spacing:0.25px;"><div style="position:absolute;left:0;top:-6px">VSSA</div></div></div>
<div class="a" style="left:512px;top:102px;width:7px;height:21px;background:#c6c6c6;"></div>
<div class="a" style="left:515.5px;top:100px;width:0;height:0"><div style="position:absolute;left:0;top:0;transform:rotate(-90deg) scaleX(0.9);transform-origin:0 0;white-space:nowrap;font-size:9.6px;line-height:12px;letter-spacing:0.25px;"><div style="position:absolute;left:0;top:-6px">VDDA</div></div></div>
<div class="a" style="left:530px;top:102px;width:7px;height:21px;background:#dcdcdc;"></div>
<div class="a" style="left:533.5px;top:100px;width:0;height:0"><div style="position:absolute;left:0;top:0;transform:rotate(-90deg) scaleX(0.9);transform-origin:0 0;white-space:nowrap;font-size:9.6px;line-height:12px;letter-spacing:0.25px;"><div style="position:absolute;left:0;top:-6px">PIO0_23/ADC_3/...</div></div></div>
<div class="a" style="left:547px;top:102px;width:7px;height:21px;background:#dcdcdc;"></div>
<div class="a" style="left:550.5px;top:100px;width:0;height:0"><div style="position:absolute;left:0;top:0;transform:rotate(-90deg) scaleX(0.9);transform-origin:0 0;white-space:nowrap;font-size:9.6px;line-height:12px;letter-spacing:0.25px;"><div style="position:absolute;left:0;top:-6px">PIO0_29</div></div></div>
<div class="a" style="left:565px;top:102px;width:7px;height:21px;background:#dcdcdc;"></div>
<div class="a" style="left:568.5px;top:100px;width:0;height:0"><div style="position:absolute;left:0;top:0;transform:rotate(-90deg) scaleX(0.9);transform-origin:0 0;white-space:nowrap;font-size:9.6px;line-height:12px;letter-spacing:0.25px;"><div style="position:absolute;left:0;top:-6px">PIO0_14/ACMP_I3/...</div></div></div>
<div class="a" style="left:300px;top:477px;width:7px;height:21px;background:#dcdcdc;"></div>
<div class="a" style="left:303.5px;top:499px;width:0;height:0"><div style="position:absolute;left:0;top:0;transform:rotate(-90deg) scaleX(0.9);transform-origin:0 0;white-space:nowrap;font-size:9.6px;line-height:12px;letter-spacing:0.25px;"><div style="position:absolute;right:0;top:-6px">PIO0_10</div></div></div>
<div class="a" style="left:318px;top:477px;width:7px;height:21px;background:#dcdcdc;"></div>
<div class="a" style="left:321.5px;top:499px;width:0;height:0"><div style="position:absolute;left:0;top:0;transform:rotate(-90deg) scaleX(0.9);transform-origin:0 0;white-space:nowrap;font-size:9.6px;line-height:12px;letter-spacing:0.25px;"><div style="position:absolute;right:0;top:-6px">PIO1_1</div></div></div>
<div class="a" style="left:335px;top:477px;width:7px;height:21px;background:#dcdcdc;"></div>
<div class="a" style="left:338.5px;top:499px;width:0;height:0"><div style="position:absolute;left:0;top:0;transform:rotate(-90deg) scaleX(0.9);transform-origin:0 0;white-space:nowrap;font-size:9.6px;line-height:12px;letter-spacing:0.25px;"><div style="position:absolute;right:0;top:-6px">PIO0_16</div></div></div>
<div class="a" style="left:353px;top:477px;width:7px;height:21px;background:#dcdcdc;"></div>
<div class="a" style="left:356.5px;top:499px;width:0;height:0"><div style="position:absolute;left:0;top:0;transform:rotate(-90deg) scaleX(0.9);transform-origin:0 0;white-space:nowrap;font-size:9.6px;line-height:12px;letter-spacing:0.25px;"><div style="position:absolute;right:0;top:-6px">PIO1_2</div></div></div>
<div class="a" style="left:371px;top:477px;width:7px;height:21px;background:#dcdcdc;"></div>
<div class="a" style="left:374.5px;top:499px;width:0;height:0"><div style="position:absolute;left:0;top:0;transform:rotate(-90deg) scaleX(0.9);transform-origin:0 0;white-space:nowrap;font-size:9.6px;line-height:12px;letter-spacing:0.25px;"><div style="position:absolute;right:0;top:-6px">PIO0_27</div></div></div>
<div class="a" style="left:388px;top:477px;width:7px;height:21px;background:#dcdcdc;"></div>
<div class="a" style="left:391.5px;top:499px;width:0;height:0"><div style="position:absolute;left:0;top:0;transform:rotate(-90deg) scaleX(0.9);transform-origin:0 0;white-space:nowrap;font-size:9.6px;line-height:12px;letter-spacing:0.25px;"><div style="position:absolute;right:0;top:-6px">PIO1_14</div></div></div>
<div class="a" style="left:406px;top:477px;width:7px;height:21px;background:#dcdcdc;"></div>
<div class="a" style="left:409.5px;top:499px;width:0;height:0"><div style="position:absolute;left:0;top:0;transform:rotate(-90deg) scaleX(0.9);transform-origin:0 0;white-space:nowrap;font-size:9.6px;line-height:12px;letter-spacing:0.25px;"><div style="position:absolute;right:0;top:-6px">PIO0_26</div></div></div>
<div class="a" style="left:424px;top:477px;width:7px;height:21px;background:#dcdcdc;"></div>
<div class="a" style="left:427.5px;top:499px;width:0;height:0"><div style="position:absolute;left:0;top:0;transform:rotate(-90deg) scaleX(0.9);transform-origin:0 0;white-space:nowrap;font-size:9.6px;line-height:12px;letter-spacing:0.25px;"><div style="position:absolute;right:0;top:-6px">PIO1_15</div></div></div>
<div class="a" style="left:441px;top:477px;width:7px;height:21px;background:#c6c6c6;"></div>
<div class="a" style="left:444.5px;top:499px;width:0;height:0"><div style="position:absolute;left:0;top:0;transform:rotate(-90deg) scaleX(0.9);transform-origin:0 0;white-space:nowrap;font-size:9.6px;line-height:12px;letter-spacing:0.25px;"><div style="position:absolute;right:0;top:-6px">VSS25</div></div></div>
<div class="a" style="left:459px;top:477px;width:7px;height:21px;background:#c6c6c6;"></div>
<div class="a" style="left:462.5px;top:499px;width:0;height:0"><div style="position:absolute;left:0;top:0;transform:rotate(-90deg) scaleX(0.9);transform-origin:0 0;white-space:nowrap;font-size:9.6px;line-height:12px;letter-spacing:0.25px;"><div style="position:absolute;right:0;top:-6px">VDD26</div></div></div>
<div class="a" style="left:477px;top:477px;width:7px;height:21px;background:#dcdcdc;"></div>
<div class="a" style="left:480.5px;top:499px;width:0;height:0"><div style="position:absolute;left:0;top:0;transform:rotate(-90deg) scaleX(0.9);transform-origin:0 0;white-space:nowrap;font-size:9.6px;line-height:12px;letter-spacing:0.25px;"><div style="position:absolute;right:0;top:-6px">PIO0_25</div></div></div>
<div class="a" style="left:494px;top:477px;width:7px;height:21px;background:#dcdcdc;"></div>
<div class="a" style="left:497.5px;top:499px;width:0;height:0"><div style="position:absolute;left:0;top:0;transform:rotate(-90deg) scaleX(0.9);transform-origin:0 0;white-space:nowrap;font-size:9.6px;line-height:12px;letter-spacing:0.25px;"><div style="position:absolute;right:0;top:-6px">PIO0_24</div></div></div>
<div class="a" style="left:512px;top:477px;width:7px;height:21px;background:#dcdcdc;"></div>
<div class="a" style="left:515.5px;top:499px;width:0;height:0"><div style="position:absolute;left:0;top:0;transform:rotate(-90deg) scaleX(0.9);transform-origin:0 0;white-space:nowrap;font-size:9.6px;line-height:12px;letter-spacing:0.25px;"><div style="position:absolute;right:0;top:-6px">PIO1_3</div></div></div>
<div class="a" style="left:530px;top:477px;width:7px;height:21px;background:#dcdcdc;"></div>
<div class="a" style="left:533.5px;top:499px;width:0;height:0"><div style="position:absolute;left:0;top:0;transform:rotate(-90deg) scaleX(0.9);transform-origin:0 0;white-space:nowrap;font-size:9.6px;line-height:12px;letter-spacing:0.25px;"><div style="position:absolute;right:0;top:-6px">PIO0_15</div></div></div>
<div class="a" style="left:547px;top:477px;width:7px;height:21px;background:#dcdcdc;"></div>
<div class="a" style="left:550.5px;top:499px;width:0;height:0"><div style="position:absolute;left:0;top:0;transform:rotate(-90deg) scaleX(0.9);transform-origin:0 0;white-space:nowrap;font-size:9.6px;line-height:12px;letter-spacing:0.25px;"><div style="position:absolute;right:0;top:-6px">PIO1_4</div></div></div>
<div class="a" style="left:565px;top:477px;width:7px;height:21px;background:#dcdcdc;"></div>
<div class="a" style="left:568.5px;top:499px;width:0;height:0"><div style="position:absolute;left:0;top:0;transform:rotate(-90deg) scaleX(0.9);transform-origin:0 0;white-space:nowrap;font-size:9.6px;line-height:12px;letter-spacing:0.25px;"><div style="position:absolute;right:0;top:-6px">PIO0_1/ACMP_I2/...</div></div></div>
<div class="a" style="left:237px;top:166px;width:21px;height:7px;background:#dcdcdc;"></div>
<div class="a" style="left:235px;top:169.5px;width:0;height:0"><div style="position:absolute;right:0;top:-7px;transform:scaleX(0.9);transform-origin:100% 50%;white-space:nowrap;font-size:9.6px;line-height:12px;letter-spacing:0.25px;">PIO1_8</div></div>
<div class="a" style="left:237px;top:183px;width:21px;height:7px;background:#dcdcdc;"></div>
<div class="a" style="left:235px;top:186.5px;width:0;height:0"><div style="position:absolute;right:0;top:-7px;transform:scaleX(0.9);transform-origin:100% 50%;white-space:nowrap;font-size:9.6px;line-height:12px;letter-spacing:0.25px;">PIO0_13/ADC_10</div></div>
<div class="a" style="left:237px;top:201px;width:21px;height:7px;background:#dcdcdc;"></div>
<div class="a" style="left:235px;top:204.5px;width:0;height:0"><div style="position:absolute;right:0;top:-7px;transform:scaleX(0.9);transform-origin:100% 50%;white-space:nowrap;font-size:9.6px;line-height:12px;letter-spacing:0.25px;">PIO1_9</div></div>
<div class="a" style="left:237px;top:218px;width:21px;height:7px;background:#dcdcdc;"></div>
<div class="a" style="left:235px;top:221.5px;width:0;height:0"><div style="position:absolute;right:0;top:-7px;transform:scaleX(0.9);transform-origin:100% 50%;white-space:nowrap;font-size:9.6px;line-height:12px;letter-spacing:0.25px;">PIO0_12</div></div>
<div class="a" style="left:237px;top:236px;width:21px;height:7px;background:#dcdcdc;"></div>
<div class="a" style="left:235px;top:239.5px;width:0;height:0"><div style="position:absolute;right:0;top:-7px;transform:scaleX(0.9);transform-origin:100% 50%;white-space:nowrap;font-size:9.6px;line-height:12px;letter-spacing:0.25px;">RESET/PIO0_5</div></div>
<div class="a" style="left:237px;top:254px;width:21px;height:7px;background:#dcdcdc;"></div>
<div class="a" style="left:235px;top:257.5px;width:0;height:0"><div style="position:absolute;right:0;top:-7px;transform:scaleX(0.9);transform-origin:100% 50%;white-space:nowrap;font-size:9.6px;line-height:12px;letter-spacing:0.25px;">PIO0_4/ADC_11</div></div>
<div class="a" style="left:237px;top:271px;width:21px;height:7px;background:#c6c6c6;"></div>
<div class="a" style="left:235px;top:274.5px;width:0;height:0"><div style="position:absolute;right:0;top:-7px;transform:scaleX(0.9);transform-origin:100% 50%;white-space:nowrap;font-size:9.6px;line-height:12px;letter-spacing:0.25px;">VDD7</div></div>
<div class="a" style="left:237px;top:289px;width:21px;height:7px;background:#c6c6c6;"></div>
<div class="a" style="left:235px;top:292.5px;width:0;height:0"><div style="position:absolute;right:0;top:-7px;transform:scaleX(0.9);transform-origin:100% 50%;white-space:nowrap;font-size:9.6px;line-height:12px;letter-spacing:0.25px;">VSS8</div></div>
<div class="a" style="left:237px;top:306px;width:21px;height:7px;background:#dcdcdc;"></div>
<div class="a" style="left:235px;top:309.5px;width:0;height:0"><div style="position:absolute;right:0;top:-7px;transform:scaleX(0.9);transform-origin:100% 50%;white-space:nowrap;font-size:9.6px;line-height:12px;letter-spacing:0.25px;">PIO1_12</div></div>
<div class="a" style="left:237px;top:324px;width:21px;height:7px;background:#dcdcdc;"></div>
<div class="a" style="left:235px;top:327.5px;width:0;height:0"><div style="position:absolute;right:0;top:-7px;transform:scaleX(0.9);transform-origin:100% 50%;white-space:nowrap;font-size:9.6px;line-height:12px;letter-spacing:0.25px;">PIO0_28/WKTCLKIN</div></div>
<div class="a" style="left:237px;top:342px;width:21px;height:7px;background:#dcdcdc;"></div>
<div class="a" style="left:235px;top:345.5px;width:0;height:0"><div style="position:absolute;right:0;top:-7px;transform:scaleX(0.9);transform-origin:100% 50%;white-space:nowrap;font-size:9.6px;line-height:12px;letter-spacing:0.25px;">PIO1_13</div></div>
<div class="a" style="left:237px;top:359px;width:21px;height:7px;background:#dcdcdc;"></div>
<div class="a" style="left:235px;top:362.5px;width:0;height:0"><div style="position:absolute;right:0;top:-7px;transform:scaleX(0.9);transform-origin:100% 50%;white-space:nowrap;font-size:9.6px;line-height:12px;letter-spacing:0.25px;">SWCLK/PIO0_3</div></div>
<div class="a" style="left:237px;top:377px;width:21px;height:7px;background:#dcdcdc;"></div>
<div class="a" style="left:235px;top:380.5px;width:0;height:0"><div style="position:absolute;right:0;top:-7px;transform:scaleX(0.9);transform-origin:100% 50%;white-space:nowrap;font-size:9.6px;line-height:12px;letter-spacing:0.25px;">PIO0_31</div></div>
<div class="a" style="left:237px;top:394px;width:21px;height:7px;background:#dcdcdc;"></div>
<div class="a" style="left:235px;top:397.5px;width:0;height:0"><div style="position:absolute;right:0;top:-7px;transform:scaleX(0.9);transform-origin:100% 50%;white-space:nowrap;font-size:9.6px;line-height:12px;letter-spacing:0.25px;">SWDIO/PIO0_2</div></div>
<div class="a" style="left:237px;top:412px;width:21px;height:7px;background:#dcdcdc;"></div>
<div class="a" style="left:235px;top:415.5px;width:0;height:0"><div style="position:absolute;right:0;top:-7px;transform:scaleX(0.9);transform-origin:100% 50%;white-space:nowrap;font-size:9.6px;line-height:12px;letter-spacing:0.25px;">PIO1_0</div></div>
<div class="a" style="left:237px;top:430px;width:21px;height:7px;background:#dcdcdc;"></div>
<div class="a" style="left:235px;top:433.5px;width:0;height:0"><div style="position:absolute;right:0;top:-7px;transform:scaleX(0.9);transform-origin:100% 50%;white-space:nowrap;font-size:9.6px;line-height:12px;letter-spacing:0.25px;">PIO0_11</div></div>
<div class="a" style="left:612px;top:166px;width:21px;height:7px;background:#dcdcdc;"></div>
<div class="a" style="left:634px;top:169.5px;width:0;height:0"><div style="position:absolute;left:0;top:-7px;transform:scaleX(0.9);transform-origin:0 50%;white-space:nowrap;font-size:9.6px;line-height:12px;letter-spacing:0.25px;">PIO0_0/ACMP_I1</div></div>
<div class="a" style="left:612px;top:183px;width:21px;height:7px;background:#dcdcdc;"></div>
<div class="a" style="left:634px;top:186.5px;width:0;height:0"><div style="position:absolute;left:0;top:-7px;transform:scaleX(0.9);transform-origin:0 50%;white-space:nowrap;font-size:9.6px;line-height:12px;letter-spacing:0.25px;">PIO1_7</div></div>
<div class="a" style="left:612px;top:201px;width:21px;height:7px;background:#dcdcdc;"></div>
<div class="a" style="left:634px;top:204.5px;width:0;height:0"><div style="position:absolute;left:0;top:-7px;transform:scaleX(0.9);transform-origin:0 50%;white-space:nowrap;font-size:9.6px;line-height:12px;letter-spacing:0.25px;">PIO0_6/ADC_1/...</div></div>
<div class="a" style="left:612px;top:218px;width:21px;height:7px;background:#dcdcdc;"></div>
<div class="a" style="left:634px;top:221.5px;width:0;height:0"><div style="position:absolute;left:0;top:-7px;transform:scaleX(0.9);transform-origin:0 50%;white-space:nowrap;font-size:9.6px;line-height:12px;letter-spacing:0.25px;">PIO0_7/ADC_0</div></div>
<div class="a" style="left:612px;top:236px;width:21px;height:7px;background:#dcdcdc;"></div>
<div class="a" style="left:634px;top:239.5px;width:0;height:0"><div style="position:absolute;left:0;top:-7px;transform:scaleX(0.9);transform-origin:0 50%;white-space:nowrap;font-size:9.6px;line-height:12px;letter-spacing:0.25px;">PIO1_19</div></div>
<div class="a" style="left:612px;top:254px;width:21px;height:7px;background:#dcdcdc;"></div>
<div class="a" style="left:634px;top:257.5px;width:0;height:0"><div style="position:absolute;left:0;top:-7px;transform:scaleX(0.9);transform-origin:0 50%;white-space:nowrap;font-size:9.6px;line-height:12px;letter-spacing:0.25px;">PIO1_18</div></div>
<div class="a" style="left:612px;top:271px;width:21px;height:7px;background:#c6c6c6;"></div>
<div class="a" style="left:634px;top:274.5px;width:0;height:0"><div style="position:absolute;left:0;top:-7px;transform:scaleX(0.9);transform-origin:0 50%;white-space:nowrap;font-size:9.6px;line-height:12px;letter-spacing:0.25px;">VREFP</div></div>
<div class="a" style="left:612px;top:289px;width:21px;height:7px;background:#c6c6c6;"></div>
<div class="a" style="left:634px;top:292.5px;width:0;height:0"><div style="position:absolute;left:0;top:-7px;transform:scaleX(0.9);transform-origin:0 50%;white-space:nowrap;font-size:9.6px;line-height:12px;letter-spacing:0.25px;">VREFN</div></div>
<div class="a" style="left:612px;top:306px;width:21px;height:7px;background:#c6c6c6;"></div>
<div class="a" style="left:634px;top:309.5px;width:0;height:0"><div style="position:absolute;left:0;top:-7px;transform:scaleX(0.9);transform-origin:0 50%;white-space:nowrap;font-size:9.6px;line-height:12px;letter-spacing:0.25px;">VSS40</div></div>
<div class="a" style="left:612px;top:324px;width:21px;height:7px;background:#c6c6c6;"></div>
<div class="a" style="left:634px;top:327.5px;width:0;height:0"><div style="position:absolute;left:0;top:-7px;transform:scaleX(0.9);transform-origin:0 50%;white-space:nowrap;font-size:9.6px;line-height:12px;letter-spacing:0.25px;">VDD39</div></div>
<div class="a" style="left:612px;top:342px;width:21px;height:7px;background:#dcdcdc;"></div>
<div class="a" style="left:634px;top:345.5px;width:0;height:0"><div style="position:absolute;left:0;top:-7px;transform:scaleX(0.9);transform-origin:0 50%;white-space:nowrap;font-size:9.6px;line-height:12px;letter-spacing:0.25px;">PIO1_6</div></div>
<div class="a" style="left:612px;top:359px;width:21px;height:7px;background:#00ff00;"></div>
<div class="a" style="left:634px;top:362.5px;width:0;height:0"><div style="position:absolute;left:0;top:-7px;transform:scaleX(0.9);transform-origin:0 50%;white-space:nowrap;font-size:9.6px;line-height:12px;letter-spacing:0.25px;">PIO1_17</div></div>
<div class="a" style="left:612px;top:377px;width:21px;height:7px;background:#00ff00;"></div>
<div class="a" style="left:634px;top:380.5px;width:0;height:0"><div style="position:absolute;left:0;top:-7px;transform:scaleX(0.9);transform-origin:0 50%;white-space:nowrap;font-size:9.6px;line-height:12px;letter-spacing:0.25px;">PIO1_16</div></div>
<div class="a" style="left:612px;top:394px;width:21px;height:7px;background:#dcdcdc;"></div>
<div class="a" style="left:634px;top:397.5px;width:0;height:0"><div style="position:absolute;left:0;top:-7px;transform:scaleX(0.9);transform-origin:0 50%;white-space:nowrap;font-size:9.6px;line-height:12px;letter-spacing:0.25px;">PIO1_5</div></div>
<div class="a" style="left:612px;top:412px;width:21px;height:7px;background:#dcdcdc;"></div>
<div class="a" style="left:634px;top:415.5px;width:0;height:0"><div style="position:absolute;left:0;top:-7px;transform:scaleX(0.9);transform-origin:0 50%;white-space:nowrap;font-size:9.6px;line-height:12px;letter-spacing:0.25px;">PIO0_8/XTALIN</div></div>
<div class="a" style="left:612px;top:430px;width:21px;height:7px;background:#dcdcdc;"></div>
<div class="a" style="left:634px;top:433.5px;width:0;height:0"><div style="position:absolute;left:0;top:-7px;transform:scaleX(0.9);transform-origin:0 50%;white-space:nowrap;font-size:9.6px;line-height:12px;letter-spacing:0.25px;">PIO0_9/XTALOUT</div></div>
</div>
<div class="a" style="left:833px;top:330px;width:93px;height:26px;border:2px solid #ffff00;"></div>
<div class="a" style="left:836px;top:333px;width:19px;height:19px;background:#dcdcdc;"></div>
<div class="t" style="left:859px;top:337px;font-size:10px;line-height:12px;letter-spacing:0.4px;transform:scaleX(0.86);transform-origin:0 50%">ACMP</div>
<div class="a" style="left:927px;top:330px;width:93px;height:26px;border:2px solid #ffff00;"></div>
<div class="a" style="left:930px;top:333px;width:19px;height:19px;background:#dcdcdc;"></div>
<div class="t" style="left:953px;top:337px;font-size:10px;line-height:12px;letter-spacing:0.4px;transform:scaleX(0.86);transform-origin:0 50%">ADC0</div>
<div class="a" style="left:1021px;top:330px;width:93px;height:26px;border:1.5px solid #ffffff;"></div>
<div class="a" style="left:1024px;top:333px;width:19px;height:19px;background:#dcdcdc;"></div>
<div class="t" style="left:1047px;top:337px;font-size:10px;line-height:12px;letter-spacing:0.4px;transform:scaleX(0.86);transform-origin:0 50%">DMA0</div>
<div class="a" style="left:833px;top:357px;width:93px;height:26px;border:2px solid #0000ff;"></div>
<div class="a" style="left:836px;top:360px;width:19px;height:19px;background:#00ff00;"></div>
<div class="t" style="left:859px;top:364px;font-size:10px;line-height:12px;letter-spacing:0.4px;transform:scaleX(0.86);transform-origin:0 50%">FTM0</div>
<div class="a" style="left:927px;top:357px;width:93px;height:26px;border:1.5px solid #ffffff;"></div>
<div class="a" style="left:930px;top:360px;width:19px;height:19px;background:#dcdcdc;"></div>
<div class="t" style="left:953px;top:364px;font-size:10px;line-height:12px;letter-spacing:0.4px;transform:scaleX(0.86);transform-origin:0 50%">FTM1</div>
<div class="a" style="left:1021px;top:357px;width:93px;height:26px;border:2px solid #ffff00;"></div>
<div class="a" style="left:1024px;top:360px;width:19px;height:19px;background:#dcdcdc;"></div>
<div class="t" style="left:1047px;top:364px;font-size:10px;line-height:12px;letter-spacing:0.4px;transform:scaleX(0.86);transform-origin:0 50%">GPIO</div>
<div class="a" style="left:833px;top:384px;width:93px;height:26px;border:2px solid #ffff00;"></div>
<div class="a" style="left:836px;top:387px;width:19px;height:19px;background:#dcdcdc;"></div>
<div class="t" style="left:859px;top:391px;font-size:10px;line-height:12px;letter-spacing:0.4px;transform:scaleX(0.86);transform-origin:0 50%">I2C0</div>
<div class="a" style="left:927px;top:384px;width:93px;height:26px;border:2px solid #ffff00;"></div>
<div class="a" style="left:930px;top:387px;width:19px;height:19px;background:#dcdcdc;"></div>
<div class="t" style="left:953px;top:391px;font-size:10px;line-height:12px;letter-spacing:0.4px;transform:scaleX(0.86);transform-origin:0 50%">I3C0</div>
<div class="a" style="left:1021px;top:384px;width:93px;height:26px;border:2px solid #ffff00;"></div>
<div class="a" style="left:1024px;top:387px;width:19px;height:19px;background:#dcdcdc;"></div>
<div class="t" style="left:1047px;top:391px;font-size:10px;line-height:12px;letter-spacing:0.4px;transform:scaleX(0.86);transform-origin:0 50%">PINT</div>
<div class="a" style="left:833px;top:411px;width:93px;height:26px;border:1.5px solid #ffffff;"></div>
<div class="a" style="left:836px;top:414px;width:19px;height:19px;background:#dcdcdc;"></div>
<div class="t" style="left:859px;top:418px;font-size:10px;line-height:12px;letter-spacing:0.4px;transform:scaleX(0.86);transform-origin:0 50%">PMU</div>
<div class="a" style="left:927px;top:411px;width:93px;height:26px;border:2px solid #ffff00;"></div>
<div class="a" style="left:930px;top:414px;width:19px;height:19px;background:#dcdcdc;"></div>
<div class="t" style="left:953px;top:418px;font-size:10px;line-height:12px;letter-spacing:0.4px;transform:scaleX(0.86);transform-origin:0 50%">SPI0</div>
<div class="a" style="left:1021px;top:411px;width:93px;height:26px;border:2px solid #ffff00;"></div>
<div class="a" style="left:1024px;top:414px;width:19px;height:19px;background:#dcdcdc;"></div>
<div class="t" style="left:1047px;top:418px;font-size:10px;line-height:12px;letter-spacing:0.4px;transform:scaleX(0.86);transform-origin:0 50%">SPI1</div>
<div class="a" style="left:833px;top:438px;width:93px;height:26px;border:1.5px solid #ffffff;"></div>
<div class="a" style="left:836px;top:441px;width:19px;height:19px;background:#c4c4c4;"></div>
<div class="t" style="left:859px;top:445px;font-size:10px;line-height:12px;letter-spacing:0.4px;transform:scaleX(0.86);transform-origin:0 50%">SUPPLY</div>
<div class="a" style="left:927px;top:438px;width:93px;height:26px;border:1.5px solid #ffffff;"></div>
<div class="a" style="left:930px;top:441px;width:19px;height:19px;background:#dcdcdc;"></div>
<div class="t" style="left:953px;top:445px;font-size:10px;line-height:12px;letter-spacing:0.4px;transform:scaleX(0.86);transform-origin:0 50%">SWD</div>
<div class="a" style="left:1021px;top:438px;width:93px;height:26px;border:2px solid #ffff00;"></div>
<div class="a" style="left:1024px;top:441px;width:19px;height:19px;background:#dcdcdc;"></div>
<div class="t" style="left:1047px;top:445px;font-size:10px;line-height:12px;letter-spacing:0.4px;transform:scaleX(0.86);transform-origin:0 50%">SYSCON</div>
<div class="a" style="left:833px;top:465px;width:93px;height:26px;border:2px solid #ffff00;"></div>
<div class="a" style="left:836px;top:468px;width:19px;height:19px;background:#00ff00;"></div>
<div class="t" style="left:859px;top:472px;font-size:10px;line-height:12px;letter-spacing:0.4px;transform:scaleX(0.86);transform-origin:0 50%">USART0</div>
<div class="a" style="left:927px;top:465px;width:93px;height:26px;border:2px solid #ffff00;"></div>
<div class="a" style="left:930px;top:468px;width:19px;height:19px;background:#dcdcdc;"></div>
<div class="t" style="left:953px;top:472px;font-size:10px;line-height:12px;letter-spacing:0.4px;transform:scaleX(0.86);transform-origin:0 50%">USART1</div>
<div class="a" style="left:1021px;top:465px;width:93px;height:26px;border:2px solid #ffff00;"></div>
<div class="a" style="left:1024px;top:468px;width:19px;height:19px;background:#dcdcdc;"></div>
<div class="t" style="left:1047px;top:472px;font-size:10px;line-height:12px;letter-spacing:0.4px;transform:scaleX(0.86);transform-origin:0 50%">USART2</div>
<div class="a" style="left:1441px;top:103px;width:479px;height:665px;background:#fff;border:1px solid #d0d0d0;"></div>
<div class="a" style="left:1442px;top:104px;width:478px;height:33px;background:#e6e6e6;border-bottom:1px solid #d8d8d8;"></div>
<div class="a" style="left:1442px;top:104px;width:124px;height:34px;background:#f2f2f2;border-right:1px solid #d8d8d8;"></div>
<svg class="a" style="left:1446px;top:112px" width="16" height="16" viewBox="0 0 16 16"><path d="M8 0.5 L0.5 8 L2.5 8 L2.5 15.5 L6.5 15.5 L6.5 11 L9.5 11 L9.5 15.5 L13.5 15.5 L13.5 8 L15.5 8 L12 4.5 L12 1 L10.5 1 L10.5 3 Z" fill="#2d9a7d"/></svg>
<div class="t" style="left:1465px;top:113px;font-size:17.3px;">Overview</div>
<svg class="a" style="left:1548px;top:117px" width="10" height="10"><path d="M0.5 0.5 L9.5 9.5 M9.5 0.5 L0.5 9.5" stroke="#1a1a1a" stroke-width="0.9"/></svg>
<svg class="a" style="left:1570px;top:113px" width="14" height="16" viewBox="0 0 14 16"><path d="M0.9 0.9 H8.8 L13.1 5.2 V15.1 H0.9 Z" fill="none" stroke="#2d9a7d" stroke-width="1.8"/><path d="M8.3 0.9 L13.1 5.7 H8.3Z" fill="#2d9a7d"/><path d="M7.8 9.6 A2.7 2.7 0 1 0 7.8 12.8" fill="none" stroke="#2d9a7d" stroke-width="2"/></svg>
<div class="t" style="left:1588px;top:113px;font-size:17.3px;">Code Preview</div>
<svg class="a" style="left:1706px;top:113px" width="16" height="16" viewBox="0 0 16 16"><rect x="0.9" y="0.9" width="14.2" height="14.2" rx="2.5" fill="none" stroke="#2d9a7d" stroke-width="1.8"/><path d="M5 3.5V9.8M10.8 6.2V12.5" stroke="#2d9a7d" stroke-width="1.6"/><circle cx="5" cy="11.3" r="1.6" fill="none" stroke="#2d9a7d" stroke-width="1.3"/><circle cx="10.8" cy="4.7" r="1.6" fill="none" stroke="#2d9a7d" stroke-width="1.3"/></svg>
<div class="t" style="left:1725px;top:113px;font-size:17.3px;letter-spacing:-0.3px;">Registers</div>
<svg class="a" style="left:1876px;top:111px" width="11" height="5"><rect x="0.5" y="0.5" width="9" height="3" fill="#fff" stroke="#000" stroke-width="1"/></svg>
<svg class="a" style="left:1899px;top:111px" width="11" height="11"><rect x="0.5" y="0.5" width="9" height="9" fill="#fff" stroke="#000" stroke-width="1"/><path d="M0 2.5H10" stroke="#000" stroke-width="1"/></svg>
<div class="a" style="left:1894px;top:137px;width:25px;height:629px;background:#f8f8f8;"></div>
<div class="a" style="left:1895px;top:163px;width:23px;height:485px;background:#cdcdcd;"></div>
<svg class="a" style="left:1900px;top:147px" width="13" height="10"><path d="M1 8.5 L6.5 3 L12 8.5" stroke="#595959" stroke-width="2.9" fill="none" stroke-linejoin="miter"/></svg>
<svg class="a" style="left:1900px;top:748px" width="13" height="10"><path d="M1 1.5 L6.5 7 L12 1.5" stroke="#595959" stroke-width="2.9" fill="none" stroke-linejoin="miter"/></svg>
<div class="a" style="left:1452px;top:142px;width:431px;height:30px;background:#f0f0f0;"></div>
<svg class="a" style="left:1464px;top:152px" width="9" height="11"><path d="M1.5 1.5 L6.5 5.5 L1.5 9.5" stroke="#2d9a7d" stroke-width="2.4" fill="none"/></svg>
<div class="t" style="left:1490px;top:149px;font-size:17.6px;font-weight:700;">Configuration - General Info</div>
<div class="a" style="left:1452px;top:174px;width:431px;height:161px;background:#f0f0f0;"></div>
<svg class="a" style="left:1462px;top:185px" width="13" height="9"><path d="M1.5 1.5 L6.5 6.5 L11.5 1.5" stroke="#2d9a7d" stroke-width="2.4" fill="none"/></svg>
<div class="t" style="left:1490px;top:181px;font-size:17.6px;font-weight:700;">Configuration - HW Info</div>
<div class="t" style="left:1378px;top:211px;width:200px;text-align:right;font-size:17px">Processor:</div>
<div class="t" style="left:1588px;top:211px;font-size:17px;">LPC865</div>
<div class="t" style="left:1378px;top:244px;width:200px;text-align:right;font-size:17px">Part number:</div>
<div class="t" style="left:1588px;top:244px;font-size:17px;color:#1a6fd1;letter-spacing:-0.2px;">LPC865M201JBD64</div>
<div class="t" style="left:1378px;top:277px;width:200px;text-align:right;font-size:17px">Core:</div>
<div class="t" style="left:1588px;top:277px;font-size:17px;">Cortex-M0P</div>
<div class="t" style="left:1378px;top:307px;width:200px;text-align:right;font-size:17px">SDK Version:</div>
<div class="t" style="left:1588px;top:307px;font-size:17px;">ksdk2_0</div>
<div class="a" style="left:1452px;top:337px;width:431px;height:30px;background:#f0f0f0;"></div>
<svg class="a" style="left:1464px;top:348px" width="9" height="11"><path d="M1.5 1.5 L6.5 5.5 L1.5 9.5" stroke="#2d9a7d" stroke-width="2.4" fill="none"/></svg>
<div class="t" style="left:1490px;top:344px;font-size:17.6px;font-weight:700;">Project</div>
<div class="a" style="left:1452px;top:377px;width:431px;height:129px;background:#f0f0f0;"></div>
<svg class="a" style="left:1462px;top:389px" width="13" height="9"><path d="M1.5 1.5 L6.5 6.5 L11.5 1.5" stroke="#2d9a7d" stroke-width="2.4" fill="none"/></svg>
<div class="t" style="left:1490px;top:384px;font-size:17.6px;font-weight:700;">Pins</div>
<div class="a" style="left:1473px;top:411px;width:90px;height:88px;background:#dddddd;border:1px solid #a6a6a6;"></div>
<svg class="a" style="left:1475px;top:413px" width="86" height="84" viewBox="0 0 86 84"><circle cx="42.7" cy="42" r="37.3" fill="#fff" stroke="#2d9a7d" stroke-width="5.2"/><rect x="27.5" y="27.4" width="28.2" height="29.3" rx="2.5" fill="none" stroke="#2d9a7d" stroke-width="2"/><rect x="29.9" y="29.8" width="23.6" height="24.4" fill="#2d9a7d"/><path d="M31.30 18.8V26.4M31.30 57.6V65.2M19 31.60H26.5M57.7 31.60H65.2M35.45 18.8V26.4M35.45 57.6V65.2M19 35.75H26.5M57.7 35.75H65.2M39.60 18.8V26.4M39.60 57.6V65.2M19 39.90H26.5M57.7 39.90H65.2M43.75 18.8V26.4M43.75 57.6V65.2M19 44.05H26.5M57.7 44.05H65.2M47.90 18.8V26.4M47.90 57.6V65.2M19 48.20H26.5M57.7 48.20H65.2M52.05 18.8V26.4M52.05 57.6V65.2M19 52.35H26.5M57.7 52.35H65.2" stroke="#2d9a7d" stroke-width="2"/></svg>
<div class="t" style="left:1569px;top:412px;font-size:16px;">Configures pin routing, including functional</div>
<div class="t" style="left:1569px;top:433px;font-size:16px;">&amp; electrical pin properties, voltage/power</div>
<div class="t" style="left:1569px;top:454px;font-size:16px;">rails, and run-time pin configuration.</div>
<div class="a" style="left:1572px;top:481px;width:32px;height:16px;background:#00c000;border-radius:8px;"></div>
<div class="a" style="left:1590px;top:483px;width:12px;height:12px;background:#fff;border-radius:6px;"></div>
<div class="a" style="left:1452px;top:509px;width:431px;height:137px;background:#f0f0f0;"></div>
<svg class="a" style="left:1462px;top:520px" width="13" height="9"><path d="M1.5 1.5 L6.5 6.5 L11.5 1.5" stroke="#2d9a7d" stroke-width="2.4" fill="none"/></svg>
<div class="t" style="left:1490px;top:516px;font-size:17.6px;font-weight:700;">Generated code</div>
<div class="a" style="left:1472px;top:544px;width:20px;height:20px;background:#fff;border:1px solid #333;"></div>
<svg class="a" style="left:1472px;top:544px" width="20" height="20"><path d="M3.5 9 L7 12.5 L15 4" stroke="#222" stroke-width="1.6" fill="none"/></svg>
<div class="t" style="left:1497px;top:547px;font-size:17.8px;">Update code enabled</div>
<svg class="a" style="left:1477px;top:579px" width="13" height="16" viewBox="0 0 13 16"><path d="M0.5 0.5 L8.5 0.5 L12.5 4.5 L12.5 15.5 L0.5 15.5Z" fill="#dcdcdc" stroke="#a0a0a0"/><path d="M3 9 L5.5 11.5 L10 6.5" stroke="#777" stroke-width="1.2" fill="none"/></svg>
<div class="t" style="left:1503px;top:580px;font-size:18px;color:#1a6fd1;">board\pin_mux.c</div>
<svg class="a" style="left:1477px;top:615px" width="13" height="16" viewBox="0 0 13 16"><path d="M0.5 0.5 L8.5 0.5 L12.5 4.5 L12.5 15.5 L0.5 15.5Z" fill="#dcdcdc" stroke="#a0a0a0"/><path d="M3 9 L5.5 11.5 L10 6.5" stroke="#777" stroke-width="1.2" fill="none"/></svg>
<div class="t" style="left:1503px;top:616px;font-size:18px;color:#1a6fd1;">board\pin_mux.h</div>
<div class="a" style="left:1452px;top:648px;width:431px;height:71px;background:#f0f0f0;"></div>
<svg class="a" style="left:1462px;top:660px" width="13" height="9"><path d="M1.5 1.5 L6.5 6.5 L11.5 1.5" stroke="#2d9a7d" stroke-width="2.4" fill="none"/></svg>
<div class="t" style="left:1490px;top:655px;font-size:17.6px;font-weight:700;">Functional groups</div>
<svg class="a" style="left:1475px;top:689px" width="14" height="16" viewBox="0 0 13 16"><path d="M0 0.5 L12 1 L12 8 L1.8 8 L1.8 15.5 L0 15.5Z" fill="#2d9a7d"/><path d="M4 10.5 L6.5 13 L11.5 8.5" stroke="#2d9a7d" stroke-width="2" fill="none"/></svg>
<div class="t" style="left:1503px;top:687px;font-size:17px;color:#1a6fd1;">BOARD_InitPins</div>
<div class="a" style="left:1452px;top:730px;width:431px;height:36px;background:#f0f0f0;"></div>
<svg class="a" style="left:1462px;top:741px" width="13" height="9"><path d="M1.5 1.5 L6.5 6.5 L11.5 1.5" stroke="#2d9a7d" stroke-width="2.4" fill="none"/></svg>
<div class="t" style="left:1490px;top:736px;font-size:17.6px;font-weight:700;">Other tools</div>
<div class="a" style="left:1466px;top:762px;width:90px;height:4px;background:#dddddd;border:1px solid #a6a6a6;border-bottom:none;"></div>
<div class="a" style="left:1571px;top:762px;width:90px;height:4px;background:#c8c8c8;border:1px solid #b0b0b0;border-bottom:none;"></div>
<div class="a" style="left:1441px;top:772px;width:479px;height:222px;background:#f0f0f0;border:1px solid #d0d0d0;"></div>
<div class="a" style="left:1442px;top:773px;width:478px;height:33px;background:#e6e6e6;border-bottom:1px solid #d8d8d8;"></div>
<div class="a" style="left:1442px;top:773px;width:124px;height:34px;background:#f2f2f2;border-right:1px solid #d8d8d8;"></div>
<svg class="a" style="left:1445px;top:782px" width="17" height="16" viewBox="0 0 17 16"><path d="M8.5 0.5 C9.5 0.5 10 1.5 10.5 2.5 L16 13 C16.6 14.2 16 15.5 14.5 15.5 L2.5 15.5 C1 15.5 0.4 14.2 1 13 L6.5 2.5 C7 1.5 7.5 0.5 8.5 0.5Z" fill="#2d9a7d"/><rect x="7.5" y="5" width="2" height="5.5" fill="#fff"/><rect x="7.5" y="12" width="2" height="2" fill="#fff"/></svg>
<div class="t" style="left:1466px;top:782px;font-size:17.3px;">Problems</div>
<svg class="a" style="left:1549px;top:786px" width="10" height="10"><path d="M0.5 0.5 L9.5 9.5 M9.5 0.5 L0.5 9.5" stroke="#1a1a1a" stroke-width="0.9"/></svg>
<div class="a" style="left:1824px;top:774px;width:23px;height:21px;background:#c3dcf2;border:1px solid #8ec5f2;"></div>
<div class="a" style="left:1847px;top:774px;width:23px;height:21px;background:#c3dcf2;border:1px solid #8ec5f2;"></div>
<div class="t" style="left:1829px;top:775px;font-size:17px;font-weight:700;color:#2d9a7d">B</div>
<svg class="a" style="left:1850px;top:776px" width="17" height="16" viewBox="0 0 17 16"><path d="M1 1 L16 1 L10 8 L10 15 L7 15 L7 8Z" fill="none" stroke="#2d9a7d" stroke-width="2"/></svg>
<svg class="a" style="left:1876px;top:780px" width="11" height="5"><rect x="0.5" y="0.5" width="9" height="3" fill="#fff" stroke="#000" stroke-width="1"/></svg>
<svg class="a" style="left:1899px;top:780px" width="11" height="11"><rect x="0.5" y="0.5" width="9" height="9" fill="#fff" stroke="#000" stroke-width="1"/><path d="M0 2.5H10" stroke="#000" stroke-width="1"/></svg>
<div class="a" style="left:1447px;top:811px;width:468px;height:31px;background:#fff;border:1px solid #7a7a7a;"></div>
<div class="t" style="left:1452px;top:817px;font-size:18.2px;color:#6d6d6d;">type filter text</div>
<div class="a" style="left:1447px;top:847px;width:468px;height:115px;background:#fff;"></div>
<div class="a" style="left:1447px;top:878px;width:99px;height:84px;background:#f7f7f7;"></div>
<div class="t" style="left:1453px;top:854px;font-size:17.3px;">Level</div>
<div class="t" style="left:1553px;top:854px;font-size:17.3px;">Resource</div>
<div class="t" style="left:1753px;top:854px;font-size:17.3px;">Issue</div>
<svg class="a" style="left:1492px;top:849px" width="12" height="7"><path d="M0.5 0.5 L6 6 L11.5 0.5" stroke="#888" stroke-width="1" fill="none"/></svg>
<div class="a" style="left:1546px;top:847px;width:1px;height:115px;background:#e3e3e3;"></div>
<div class="a" style="left:1746px;top:847px;width:1px;height:115px;background:#e3e3e3;"></div>
<div class="a" style="left:1447px;top:905px;width:468px;height:1px;background:#e3e3e3;"></div>
<div class="a" style="left:1447px;top:933px;width:468px;height:1px;background:#e3e3e3;"></div>
<div class="a" style="left:1447px;top:961px;width:468px;height:1px;background:#e3e3e3;"></div>
<div class="a" style="left:1447px;top:962px;width:468px;height:25px;background:#f0f0f0;"></div>
<div class="a" style="left:1473px;top:963px;width:176px;height:23px;background:#cdcdcd;"></div>
<svg class="a" style="left:1454px;top:969px" width="10" height="13"><path d="M8.5 1 L3 6.5 L8.5 12" stroke="#595959" stroke-width="2.9" fill="none" stroke-linejoin="miter"/></svg>
<svg class="a" style="left:1896px;top:969px" width="10" height="13"><path d="M1.5 1 L7 6.5 L1.5 12" stroke="#595959" stroke-width="2.9" fill="none" stroke-linejoin="miter"/></svg>
<div class="a" style="left:0px;top:699px;width:1437px;height:295px;background:#f0f0f0;border:1px solid #d0d0d0;"></div>
<div class="a" style="left:1px;top:700px;width:1435px;height:33px;background:#e6e6e6;border-bottom:1px solid #d8d8d8;"></div>
<div class="a" style="left:1px;top:700px;width:150px;height:34px;background:#f2f2f2;border-right:1px solid #d8d8d8;"></div>
<svg class="a" style="left:5px;top:709px" width="16" height="16" viewBox="0 0 16 17"><rect x="3" y="1" width="10" height="15" fill="none" stroke="#2d9a7d" stroke-width="1.8"/><path d="M0 5H3M0 12H3M13 5H16M13 12H16" stroke="#2d9a7d" stroke-width="1.5"/><path d="M3 6H13M3 11H13" stroke="#2d9a7d" stroke-width="1.6"/><path d="M3 9 L13 4" stroke="#2d9a7d" stroke-width="1.3"/></svg>
<div class="t" style="left:25px;top:708px;font-size:17.3px;">Routing Details</div>
<svg class="a" style="left:1367px;top:704px" width="17" height="16" viewBox="0 0 17 16"><rect x="1" y="1" width="15" height="11.5" rx="2" fill="none" stroke="#2d9a7d" stroke-width="1.8"/><path d="M4 5.5H13M5.5 8.5H11.5" stroke="#2d9a7d" stroke-width="1.6"/><path d="M10 12.5 L11 15 L13 12.5" fill="#2d9a7d"/></svg>
<svg class="a" style="left:1393px;top:707px" width="11" height="5"><rect x="0.5" y="0.5" width="9" height="3" fill="#fff" stroke="#000" stroke-width="1"/></svg>
<svg class="a" style="left:1416px;top:707px" width="11" height="11"><rect x="0.5" y="0.5" width="9" height="9" fill="#fff" stroke="#000" stroke-width="1"/><path d="M0 2.5H10" stroke="#000" stroke-width="1"/></svg>
<div class="a" style="left:7px;top:738px;width:43px;height:33px;background:#cce4f7;border:1px solid #1d64a8;"></div>
<div class="t" style="left:13px;top:746px;font-size:17.3px;">Pins</div>
<div class="a" style="left:56px;top:738px;width:67px;height:33px;background:#cce4f7;border:1px solid #1d64a8;"></div>
<div class="t" style="left:61px;top:746px;font-size:17.3px;letter-spacing:-0.2px;">Signals</div>
<div class="a" style="left:128px;top:737px;width:1303px;height:35px;background:#fff;border:1px solid #7a7a7a;"></div>
<svg class="a" style="left:135px;top:745px" width="17" height="17" viewBox="0 0 17 17"><circle cx="11" cy="6" r="4.3" fill="none" stroke="#555" stroke-width="2.4"/><path d="M8 9 L1.5 15.5" stroke="#555" stroke-width="2.6" stroke-linecap="round"/></svg>
<div class="t" style="left:155px;top:744px;font-size:17.5px;color:#6d6d6d;">type filter text</div>
<div class="a" style="left:6px;top:775px;width:1425px;height:215px;background:#fff;border:1px solid #a4a4ac;border-top-color:#d4d4d4;border-left-width:1px;"></div>
<div class="a" style="left:13px;top:782px;width:1411px;height:200px;background:#fff;border:1px solid #a8c8ec;"></div>
<div class="a" style="left:14px;top:783px;width:1409px;height:34px;background:#b9d1ea;"></div>
<div class="t" style="left:17px;top:790px;font-size:17.5px;">Routing Details for...</div>
<div class="a" style="left:227px;top:784px;width:35px;height:31px;background:#fff;border:1px solid #7a7a7a;"></div>
<div class="t" style="left:240px;top:790px;font-size:17.5px;">3</div>
<div class="a" style="left:268px;top:789px;width:20px;height:20px;border:1px solid #a4a8ac;"></div>
<div class="a" style="left:295px;top:789px;width:20px;height:20px;border:1px solid #a4a8ac;"></div>
<div class="a" style="left:322px;top:789px;width:20px;height:20px;border:1px solid #a4a8ac;"></div>
<div class="a" style="left:349px;top:789px;width:20px;height:20px;border:1px solid #a4a8ac;"></div>
<svg class="a" style="left:270px;top:791px" width="17" height="17"><circle cx="8" cy="8" r="8" fill="#2d9a7d"/><path d="M8 4V12M4 8H12" stroke="#fff" stroke-width="2.2"/></svg>
<svg class="a" style="left:297px;top:791px" width="17" height="17"><circle cx="8" cy="8" r="8" fill="#2d9a7d"/><path d="M4.2 4.2L11.8 11.8M11.8 4.2L4.2 11.8" stroke="#fff" stroke-width="2.2"/></svg>
<svg class="a" style="left:326px;top:794px" width="13" height="9"><path d="M1.5 7 L6.5 2 L11.5 7" stroke="#aab8c6" stroke-width="2.4" fill="none"/></svg>
<svg class="a" style="left:353px;top:796px" width="13" height="8"><path d="M1.5 1.5 L6.5 6.5 L11.5 1.5" stroke="#2d9a7d" stroke-width="2.2" fill="none"/></svg>
<div class="a" style="left:14px;top:817px;width:1409px;height:139px;background:#fff;"></div>
<div class="a" style="left:746px;top:848px;width:263px;height:57px;background:#f0f0f0;"></div>
<div class="a" style="left:58px;top:906px;width:1363px;height:28px;background:#ffff00;"></div>
<div class="a" style="left:15px;top:848px;width:42px;height:28px;background:#0a6cd0;"></div>
<div class="a" style="left:57px;top:817px;width:1px;height:138px;background:#ececec;"></div>
<div class="a" style="left:149px;top:817px;width:1px;height:138px;background:#ececec;"></div>
<div class="a" style="left:229px;top:817px;width:1px;height:138px;background:#ececec;"></div>
<div class="a" style="left:291px;top:817px;width:1px;height:138px;background:#ececec;"></div>
<div class="a" style="left:446px;top:817px;width:1px;height:138px;background:#ececec;"></div>
<div class="a" style="left:596px;top:817px;width:1px;height:138px;background:#ececec;"></div>
<div class="a" style="left:746px;top:817px;width:1px;height:138px;background:#ececec;"></div>
<div class="a" style="left:865px;top:817px;width:1px;height:138px;background:#ececec;"></div>
<div class="a" style="left:1009px;top:817px;width:1px;height:138px;background:#ececec;"></div>
<div class="a" style="left:1089px;top:817px;width:1px;height:138px;background:#ececec;"></div>
<div class="a" style="left:1172px;top:817px;width:1px;height:138px;background:#ececec;"></div>
<div class="a" style="left:1266px;top:817px;width:1px;height:138px;background:#ececec;"></div>
<div class="a" style="left:1369px;top:817px;width:1px;height:138px;background:#ececec;"></div>
<div class="a" style="left:14px;top:876px;width:1407px;height:1px;background:#ececec;"></div>
<div class="a" style="left:14px;top:905px;width:1407px;height:1px;background:#ececec;"></div>
<div class="a" style="left:14px;top:934px;width:1407px;height:1px;background:#ececec;"></div>
<div class="a" style="left:20px;top:824px;width:37px;height:22px;overflow:hidden;white-space:nowrap;line-height:20px;font-size:17.3px;">#</div>
<div class="a" style="left:63px;top:824px;width:86px;height:22px;overflow:hidden;white-space:nowrap;line-height:20px;font-size:17.3px;">Peripheral</div>
<div class="a" style="left:155px;top:824px;width:74px;height:22px;overflow:hidden;white-space:nowrap;line-height:20px;font-size:17.3px;">Signal</div>
<div class="a" style="left:235px;top:824px;width:56px;height:22px;overflow:hidden;white-space:nowrap;line-height:20px;font-size:17.3px;">Arrow</div>
<div class="a" style="left:297px;top:824px;width:149px;height:22px;overflow:hidden;white-space:nowrap;line-height:20px;font-size:17.3px;">Routed pin/signal</div>
<div class="a" style="left:452px;top:824px;width:144px;height:22px;overflow:hidden;white-space:nowrap;line-height:20px;font-size:17.3px;">Label</div>
<div class="a" style="left:602px;top:824px;width:144px;height:22px;overflow:hidden;white-space:nowrap;line-height:20px;font-size:17.3px;">Identifier</div>
<div class="a" style="left:752px;top:824px;width:113px;height:22px;overflow:hidden;white-space:nowrap;line-height:20px;font-size:17.3px;">Direction</div>
<div class="a" style="left:871px;top:824px;width:138px;height:22px;overflow:hidden;white-space:nowrap;line-height:20px;font-size:17.3px;">GPIO initial state</div>
<div class="a" style="left:1015px;top:824px;width:74px;height:22px;overflow:hidden;white-space:nowrap;line-height:20px;font-size:17.3px;">Mode</div>
<div class="a" style="left:1095px;top:824px;width:77px;height:22px;overflow:hidden;white-space:nowrap;line-height:20px;font-size:17.3px;">Invert</div>
<div class="a" style="left:1178px;top:824px;width:88px;height:22px;overflow:hidden;white-space:nowrap;line-height:20px;font-size:17.3px;">Hysteresis</div>
<div class="a" style="left:1272px;top:824px;width:97px;height:22px;overflow:hidden;white-space:nowrap;line-height:20px;font-size:17.3px;">Open drain</div>
<div class="a" style="left:1375px;top:824px;width:48px;height:22px;overflow:hidden;white-space:nowrap;line-height:20px;font-size:17.3px;">Digita</div>
<div class="a" style="left:20px;top:854px;width:37px;height:22px;overflow:hidden;white-space:nowrap;line-height:20px;font-size:17.3px;">37</div>
<div class="a" style="left:63px;top:854px;width:86px;height:22px;overflow:hidden;white-space:nowrap;line-height:20px;font-size:17.3px;"><span style="display:inline-block;letter-spacing:-0.8px">USART0</span></div>
<div class="a" style="left:155px;top:854px;width:74px;height:22px;overflow:hidden;white-space:nowrap;line-height:20px;font-size:17.3px;">TXD</div>
<div class="a" style="left:235px;top:854px;width:56px;height:22px;overflow:hidden;white-space:nowrap;line-height:20px;font-size:17.3px;color:#7a7a7a;">-></div>
<div class="a" style="left:297px;top:854px;width:149px;height:22px;overflow:hidden;white-space:nowrap;line-height:20px;font-size:17.3px;">[37] PIO1_17</div>
<div class="a" style="left:452px;top:854px;width:144px;height:22px;overflow:hidden;white-space:nowrap;line-height:20px;font-size:17.3px;"><span style="display:inline-block;transform:scaleX(0.885);transform-origin:0 50%">DEBUG_UART_TX</span></div>
<div class="a" style="left:602px;top:854px;width:144px;height:22px;overflow:hidden;white-space:nowrap;line-height:20px;font-size:17.3px;"><span style="display:inline-block;transform:scaleX(0.885);transform-origin:0 50%">DEBUG_UART_TX</span></div>
<div class="a" style="left:752px;top:854px;width:113px;height:22px;overflow:hidden;white-space:nowrap;line-height:20px;font-size:17.3px;"><i>Output</i></div>
<div class="a" style="left:871px;top:854px;width:138px;height:22px;overflow:hidden;white-space:nowrap;line-height:20px;font-size:17.3px;"><i>n/a</i></div>
<div class="a" style="left:1015px;top:854px;width:74px;height:22px;overflow:hidden;white-space:nowrap;line-height:20px;font-size:17.3px;">PullUp</div>
<div class="a" style="left:1095px;top:854px;width:77px;height:22px;overflow:hidden;white-space:nowrap;line-height:20px;font-size:17.3px;">Disabled</div>
<div class="a" style="left:1178px;top:854px;width:88px;height:22px;overflow:hidden;white-space:nowrap;line-height:20px;font-size:17.3px;">Enabled</div>
<div class="a" style="left:1272px;top:854px;width:97px;height:22px;overflow:hidden;white-space:nowrap;line-height:20px;font-size:17.3px;">Disabled</div>
<div class="a" style="left:1375px;top:854px;width:48px;height:22px;overflow:hidden;white-space:nowrap;line-height:20px;font-size:17.3px;">Bypas</div>
<div class="a" style="left:20px;top:883px;width:37px;height:22px;overflow:hidden;white-space:nowrap;line-height:20px;font-size:17.3px;">36</div>
<div class="a" style="left:63px;top:883px;width:86px;height:22px;overflow:hidden;white-space:nowrap;line-height:20px;font-size:17.3px;"><span style="display:inline-block;letter-spacing:-0.8px">USART0</span></div>
<div class="a" style="left:155px;top:883px;width:74px;height:22px;overflow:hidden;white-space:nowrap;line-height:20px;font-size:17.3px;">RXD</div>
<div class="a" style="left:235px;top:883px;width:56px;height:22px;overflow:hidden;white-space:nowrap;line-height:20px;font-size:17.3px;color:#7a7a7a;"><-</div>
<div class="a" style="left:297px;top:883px;width:149px;height:22px;overflow:hidden;white-space:nowrap;line-height:20px;font-size:17.3px;">[36] PIO1_16</div>
<div class="a" style="left:452px;top:883px;width:144px;height:22px;overflow:hidden;white-space:nowrap;line-height:20px;font-size:17.3px;"><span style="display:inline-block;transform:scaleX(0.885);transform-origin:0 50%">DEBUG_UART_RX</span></div>
<div class="a" style="left:602px;top:883px;width:144px;height:22px;overflow:hidden;white-space:nowrap;line-height:20px;font-size:17.3px;"><span style="display:inline-block;transform:scaleX(0.885);transform-origin:0 50%">DEBUG_UART_RX</span></div>
<div class="a" style="left:752px;top:883px;width:113px;height:22px;overflow:hidden;white-space:nowrap;line-height:20px;font-size:17.3px;"><i>Input</i></div>
<div class="a" style="left:871px;top:883px;width:138px;height:22px;overflow:hidden;white-space:nowrap;line-height:20px;font-size:17.3px;"><i>n/a</i></div>
<div class="a" style="left:1015px;top:883px;width:74px;height:22px;overflow:hidden;white-space:nowrap;line-height:20px;font-size:17.3px;">PullUp</div>
<div class="a" style="left:1095px;top:883px;width:77px;height:22px;overflow:hidden;white-space:nowrap;line-height:20px;font-size:17.3px;">Disabled</div>
<div class="a" style="left:1178px;top:883px;width:88px;height:22px;overflow:hidden;white-space:nowrap;line-height:20px;font-size:17.3px;">Enabled</div>
<div class="a" style="left:1272px;top:883px;width:97px;height:22px;overflow:hidden;white-space:nowrap;line-height:20px;font-size:17.3px;">Disabled</div>
<div class="a" style="left:1375px;top:883px;width:48px;height:22px;overflow:hidden;white-space:nowrap;line-height:20px;font-size:17.3px;">Bypas</div>
<div class="a" style="left:20px;top:912px;width:37px;height:22px;overflow:hidden;white-space:nowrap;line-height:20px;font-size:17.3px;">63</div>
<div class="a" style="left:63px;top:912px;width:86px;height:22px;overflow:hidden;white-space:nowrap;line-height:20px;font-size:17.3px;">FTM0</div>
<div class="a" style="left:155px;top:912px;width:74px;height:22px;overflow:hidden;white-space:nowrap;line-height:20px;font-size:17.3px;">CH, 0</div>
<div class="a" style="left:235px;top:912px;width:56px;height:22px;overflow:hidden;white-space:nowrap;line-height:20px;font-size:17.3px;color:#7a7a7a;">-</div>
<div class="a" style="left:297px;top:912px;width:149px;height:22px;overflow:hidden;white-space:nowrap;line-height:20px;font-size:17.3px;">[63] PIO0_17</div>
<div class="a" style="left:452px;top:912px;width:144px;height:22px;overflow:hidden;white-space:nowrap;line-height:20px;font-size:17.3px;"></div>
<div class="a" style="left:602px;top:912px;width:144px;height:22px;overflow:hidden;white-space:nowrap;line-height:20px;font-size:17.3px;"><i>n/a</i></div>
<div class="a" style="left:752px;top:912px;width:113px;height:22px;overflow:hidden;white-space:nowrap;line-height:20px;font-size:17.3px;"><i>Not Specified</i></div>
<div class="a" style="left:871px;top:912px;width:138px;height:22px;overflow:hidden;white-space:nowrap;line-height:20px;font-size:17.3px;"><i>n/a</i></div>
<div class="a" style="left:1015px;top:912px;width:74px;height:22px;overflow:hidden;white-space:nowrap;line-height:20px;font-size:17.3px;"><i>Inactive</i></div>
<div class="a" style="left:1095px;top:912px;width:77px;height:22px;overflow:hidden;white-space:nowrap;line-height:20px;font-size:17.3px;"><i>Disabled</i></div>
<div class="a" style="left:1178px;top:912px;width:88px;height:22px;overflow:hidden;white-space:nowrap;line-height:20px;font-size:17.3px;"><i>Enabled</i></div>
<div class="a" style="left:1272px;top:912px;width:97px;height:22px;overflow:hidden;white-space:nowrap;line-height:20px;font-size:17.3px;"><i>Disabled</i></div>
<div class="a" style="left:1375px;top:912px;width:48px;height:22px;overflow:hidden;white-space:nowrap;line-height:20px;font-size:17.3px;"><i>Bypas</i></div>
<div class="a" style="left:15px;top:956px;width:1407px;height:24px;background:#f0f0f0;"></div>
<div class="a" style="left:41px;top:956px;width:1099px;height:24px;background:#cdcdcd;"></div>
<svg class="a" style="left:22px;top:963px" width="10" height="13"><path d="M8.5 1 L3 6.5 L8.5 12" stroke="#505050" stroke-width="2.9" fill="none" stroke-linejoin="miter"/></svg>
<svg class="a" style="left:1402px;top:963px" width="10" height="13"><path d="M1.5 1 L7 6.5 L1.5 12" stroke="#505050" stroke-width="2.9" fill="none" stroke-linejoin="miter"/></svg>

</body></html>
